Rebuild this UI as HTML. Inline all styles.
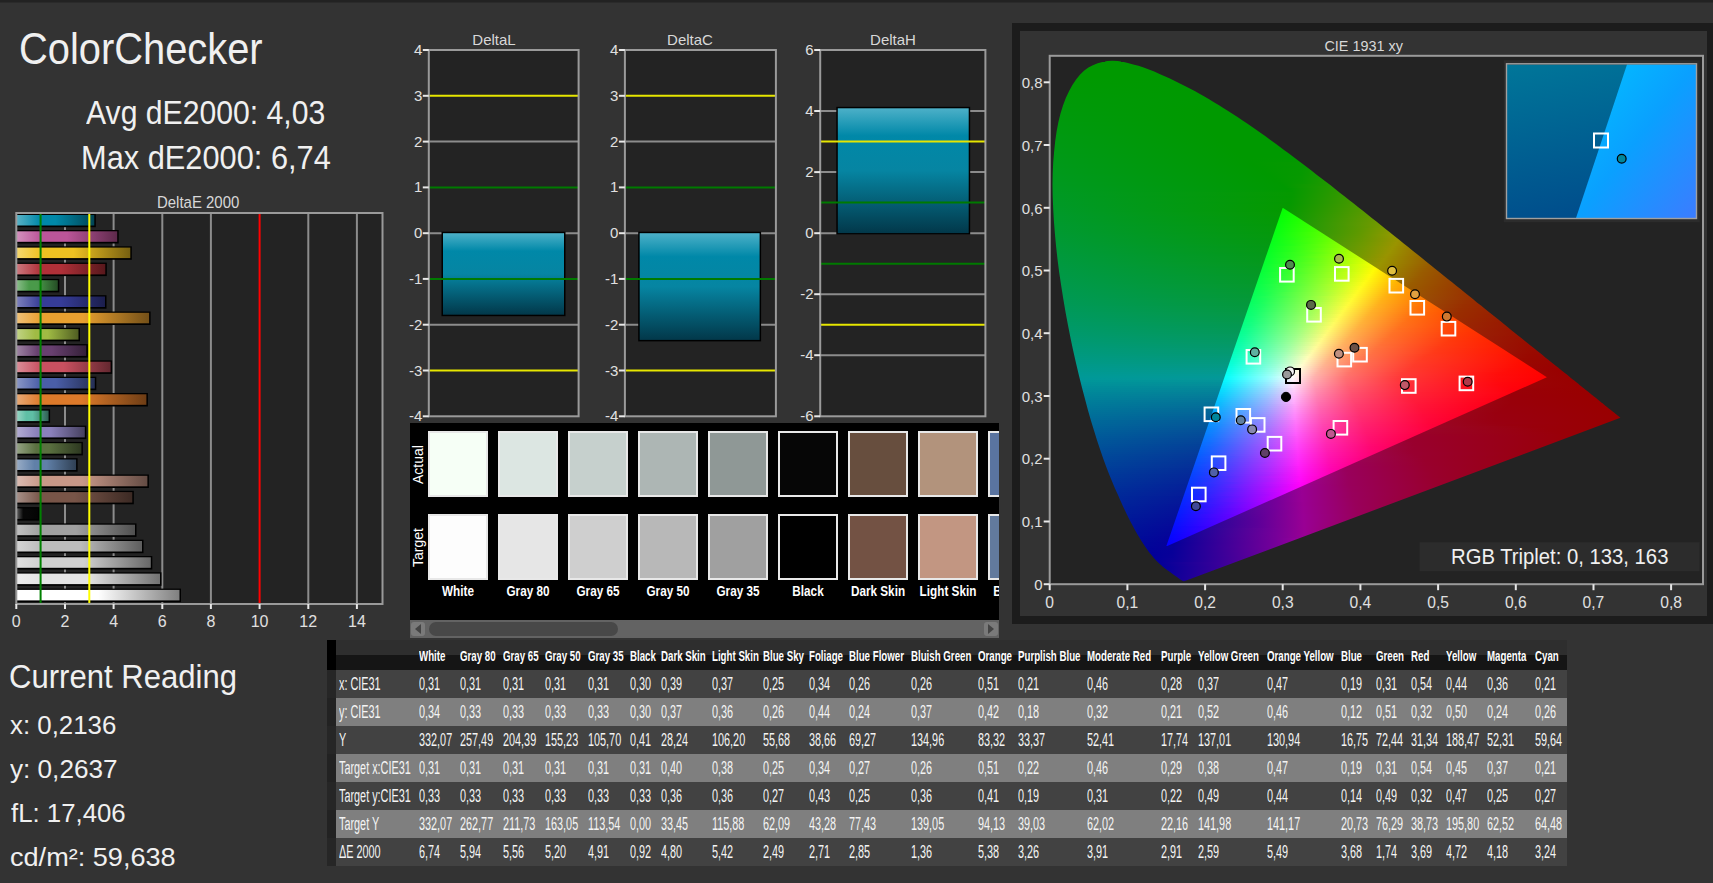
<!DOCTYPE html><html><head><meta charset="utf-8"><style>
html,body{margin:0;padding:0;}
body{width:1713px;height:883px;overflow:hidden;background:#333333;position:relative;font-family:"Liberation Sans",sans-serif;}
.t{position:absolute;white-space:nowrap;line-height:1;transform-origin:0 0;}
.a{position:absolute;}
i{position:absolute;display:block;}
svg{position:absolute;left:0;top:0;}
</style></head><body><div class="a" style="left:0;top:0;width:1713px;height:2px;background:#222222"></div><div class="a" style="left:0;top:2px;width:1713px;height:1px;background:#2a2a2a"></div><div class="t" style="left:19.24px;top:26.63px;font-size:43.90px;color:#f0f0f0;transform:scaleX(0.9079);">ColorChecker</div><div class="t" style="left:85.90px;top:96.28px;font-size:33.80px;color:#f0f0f0;transform:scaleX(0.8926);">Avg dE2000: 4,03</div><div class="t" style="left:81.00px;top:140.58px;font-size:33.80px;color:#f0f0f0;transform:scaleX(0.9105);">Max dE2000: 6,74</div><div class="t" style="left:157.30px;top:194.30px;font-size:16.30px;color:#d8d8d8;transform:scaleX(0.9185);">DeltaE 2000</div><div class="t" style="left:9.26px;top:659.86px;font-size:33.00px;color:#f0f0f0;transform:scaleX(0.9414);">Current Reading</div><div class="t" style="left:10.19px;top:711.73px;font-size:26.30px;color:#f0f0f0;transform:scaleX(0.9821);">x: 0,2136</div><div class="t" style="left:10.19px;top:755.83px;font-size:26.30px;color:#f0f0f0;transform:scaleX(0.9937);">y: 0,2637</div><div class="t" style="left:10.60px;top:800.43px;font-size:26.30px;color:#f0f0f0;transform:scaleX(0.9806);">fL: 17,406</div><div class="t" style="left:10.38px;top:844.33px;font-size:26.30px;color:#f0f0f0;transform:scaleX(1.0301);">cd/m²: 59,638</div><svg width="1713" height="883" viewBox="0 0 1713 883" style="left:0;top:0"><defs><linearGradient id="bg0" x1="0" x2="1" y1="0" y2="0"><stop offset="0" stop-color="#59b2c6"/><stop offset="0.300" stop-color="#0088a8"/><stop offset="0.5" stop-color="#0088a8"/><stop offset="1" stop-color="#004454"/></linearGradient><linearGradient id="bg1" x1="0" x2="1" y1="0" y2="0"><stop offset="0" stop-color="#d390bd"/><stop offset="0.238" stop-color="#bb5599"/><stop offset="0.5" stop-color="#bb5599"/><stop offset="1" stop-color="#5e2a4c"/></linearGradient><linearGradient id="bg2" x1="0" x2="1" y1="0" y2="0"><stop offset="0" stop-color="#f4d76f"/><stop offset="0.210" stop-color="#eec122"/><stop offset="0.5" stop-color="#eec122"/><stop offset="1" stop-color="#776011"/></linearGradient><linearGradient id="bg3" x1="0" x2="1" y1="0" y2="0"><stop offset="0" stop-color="#cc787e"/><stop offset="0.270" stop-color="#b03038"/><stop offset="0.5" stop-color="#b03038"/><stop offset="1" stop-color="#58181c"/></linearGradient><linearGradient id="bg4" x1="0" x2="1" y1="0" y2="0"><stop offset="0" stop-color="#89bd89"/><stop offset="0.300" stop-color="#4a9a4a"/><stop offset="0.5" stop-color="#4a9a4a"/><stop offset="1" stop-color="#254d25"/></linearGradient><linearGradient id="bg5" x1="0" x2="1" y1="0" y2="0"><stop offset="0" stop-color="#7c80bc"/><stop offset="0.270" stop-color="#363c98"/><stop offset="0.5" stop-color="#363c98"/><stop offset="1" stop-color="#1b1e4c"/></linearGradient><linearGradient id="bg6" x1="0" x2="1" y1="0" y2="0"><stop offset="0" stop-color="#f0c178"/><stop offset="0.181" stop-color="#e8a030"/><stop offset="0.5" stop-color="#e8a030"/><stop offset="1" stop-color="#745018"/></linearGradient><linearGradient id="bg7" x1="0" x2="1" y1="0" y2="0"><stop offset="0" stop-color="#c1d385"/><stop offset="0.300" stop-color="#a0bb44"/><stop offset="0.5" stop-color="#a0bb44"/><stop offset="1" stop-color="#505e22"/></linearGradient><linearGradient id="bg8" x1="0" x2="1" y1="0" y2="0"><stop offset="0" stop-color="#9d83a2"/><stop offset="0.300" stop-color="#684070"/><stop offset="0.5" stop-color="#684070"/><stop offset="1" stop-color="#342038"/></linearGradient><linearGradient id="bg9" x1="0" x2="1" y1="0" y2="0"><stop offset="0" stop-color="#db8d98"/><stop offset="0.254" stop-color="#c85060"/><stop offset="0.5" stop-color="#c85060"/><stop offset="1" stop-color="#642830"/></linearGradient><linearGradient id="bg10" x1="0" x2="1" y1="0" y2="0"><stop offset="0" stop-color="#8996c6"/><stop offset="0.300" stop-color="#4a5ea8"/><stop offset="0.5" stop-color="#4a5ea8"/><stop offset="1" stop-color="#252f54"/></linearGradient><linearGradient id="bg11" x1="0" x2="1" y1="0" y2="0"><stop offset="0" stop-color="#e9a975"/><stop offset="0.184" stop-color="#dd7a2a"/><stop offset="0.5" stop-color="#dd7a2a"/><stop offset="1" stop-color="#6e3d15"/></linearGradient><linearGradient id="bg12" x1="0" x2="1" y1="0" y2="0"><stop offset="0" stop-color="#97d5c4"/><stop offset="0.300" stop-color="#5fbfa5"/><stop offset="0.5" stop-color="#5fbfa5"/><stop offset="1" stop-color="#306052"/></linearGradient><linearGradient id="bg13" x1="0" x2="1" y1="0" y2="0"><stop offset="0" stop-color="#b3acd3"/><stop offset="0.300" stop-color="#8a80bb"/><stop offset="0.5" stop-color="#8a80bb"/><stop offset="1" stop-color="#45405e"/></linearGradient><linearGradient id="bg14" x1="0" x2="1" y1="0" y2="0"><stop offset="0" stop-color="#94a283"/><stop offset="0.300" stop-color="#5a7040"/><stop offset="0.5" stop-color="#5a7040"/><stop offset="1" stop-color="#2d3820"/></linearGradient><linearGradient id="bg15" x1="0" x2="1" y1="0" y2="0"><stop offset="0" stop-color="#98acc6"/><stop offset="0.300" stop-color="#6080a8"/><stop offset="0.5" stop-color="#6080a8"/><stop offset="1" stop-color="#304054"/></linearGradient><linearGradient id="bg16" x1="0" x2="1" y1="0" y2="0"><stop offset="0" stop-color="#dbbcb2"/><stop offset="0.183" stop-color="#c89888"/><stop offset="0.5" stop-color="#c89888"/><stop offset="1" stop-color="#644c44"/></linearGradient><linearGradient id="bg17" x1="0" x2="1" y1="0" y2="0"><stop offset="0" stop-color="#a79088"/><stop offset="0.207" stop-color="#785548"/><stop offset="0.5" stop-color="#785548"/><stop offset="1" stop-color="#3c2a24"/></linearGradient><linearGradient id="bg18" x1="0" x2="1" y1="0" y2="0"><stop offset="0" stop-color="#5e5e5e"/><stop offset="0.300" stop-color="#080808"/><stop offset="0.5" stop-color="#080808"/><stop offset="1" stop-color="#040404"/></linearGradient><linearGradient id="bg19" x1="0" x2="1" y1="0" y2="0"><stop offset="0" stop-color="#c1c1c1"/><stop offset="0.202" stop-color="#a0a0a0"/><stop offset="0.5" stop-color="#a0a0a0"/><stop offset="1" stop-color="#505050"/></linearGradient><linearGradient id="bg20" x1="0" x2="1" y1="0" y2="0"><stop offset="0" stop-color="#d4d4d4"/><stop offset="0.191" stop-color="#bdbdbd"/><stop offset="0.5" stop-color="#bdbdbd"/><stop offset="1" stop-color="#5e5e5e"/></linearGradient><linearGradient id="bg21" x1="0" x2="1" y1="0" y2="0"><stop offset="0" stop-color="#e0e0e0"/><stop offset="0.178" stop-color="#d0d0d0"/><stop offset="0.5" stop-color="#d0d0d0"/><stop offset="1" stop-color="#686868"/></linearGradient><linearGradient id="bg22" x1="0" x2="1" y1="0" y2="0"><stop offset="0" stop-color="#ededed"/><stop offset="0.167" stop-color="#e4e4e4"/><stop offset="0.5" stop-color="#e4e4e4"/><stop offset="1" stop-color="#727272"/></linearGradient><linearGradient id="bg23" x1="0" x2="1" y1="0" y2="0"><stop offset="0" stop-color="#ffffff"/><stop offset="0.147" stop-color="#ffffff"/><stop offset="0.5" stop-color="#ffffff"/><stop offset="1" stop-color="#808080"/></linearGradient><linearGradient id="tealv" x1="0" x2="0" y1="0" y2="1"><stop offset="0" stop-color="#4cb0c8"/><stop offset="0.22" stop-color="#0088a8"/><stop offset="0.5" stop-color="#0685a2"/><stop offset="1" stop-color="#02384a"/></linearGradient></defs><rect x="16.3" y="213.0" width="366.2" height="391.0" fill="#232323"/><line x1="65.0" y1="213.0" x2="65.0" y2="604.0" stroke="#8c8c8c" stroke-width="2"/><line x1="113.6" y1="213.0" x2="113.6" y2="604.0" stroke="#8c8c8c" stroke-width="2"/><line x1="162.3" y1="213.0" x2="162.3" y2="604.0" stroke="#8c8c8c" stroke-width="2"/><line x1="210.9" y1="213.0" x2="210.9" y2="604.0" stroke="#8c8c8c" stroke-width="2"/><line x1="308.3" y1="213.0" x2="308.3" y2="604.0" stroke="#8c8c8c" stroke-width="2"/><line x1="356.9" y1="213.0" x2="356.9" y2="604.0" stroke="#8c8c8c" stroke-width="2"/><rect x="16.3" y="213.7" width="79.5" height="13.5" fill="#000"/><rect x="16.8" y="215.0" width="77.5" height="10.5" fill="url(#bg0)"/><rect x="16.3" y="230.0" width="102.4" height="13.5" fill="#000"/><rect x="16.8" y="231.3" width="100.4" height="10.5" fill="url(#bg1)"/><rect x="16.3" y="246.3" width="115.5" height="13.5" fill="#000"/><rect x="16.8" y="247.6" width="113.5" height="10.5" fill="url(#bg2)"/><rect x="16.3" y="262.6" width="90.5" height="13.5" fill="#000"/><rect x="16.8" y="263.9" width="88.5" height="10.5" fill="url(#bg3)"/><rect x="16.3" y="278.9" width="43.0" height="13.5" fill="#000"/><rect x="16.8" y="280.2" width="41.0" height="10.5" fill="url(#bg4)"/><rect x="16.3" y="295.2" width="90.2" height="13.5" fill="#000"/><rect x="16.8" y="296.5" width="88.2" height="10.5" fill="url(#bg5)"/><rect x="16.3" y="311.5" width="134.3" height="13.5" fill="#000"/><rect x="16.8" y="312.8" width="132.3" height="10.5" fill="url(#bg6)"/><rect x="16.3" y="327.8" width="63.7" height="13.5" fill="#000"/><rect x="16.8" y="329.1" width="61.7" height="10.5" fill="url(#bg7)"/><rect x="16.3" y="344.1" width="71.5" height="13.5" fill="#000"/><rect x="16.8" y="345.4" width="69.5" height="10.5" fill="url(#bg8)"/><rect x="16.3" y="360.4" width="95.8" height="13.5" fill="#000"/><rect x="16.8" y="361.7" width="93.8" height="10.5" fill="url(#bg9)"/><rect x="16.3" y="376.7" width="80.0" height="13.5" fill="#000"/><rect x="16.8" y="378.0" width="78.0" height="10.5" fill="url(#bg10)"/><rect x="16.3" y="393.0" width="131.6" height="13.5" fill="#000"/><rect x="16.8" y="394.3" width="129.6" height="10.5" fill="url(#bg11)"/><rect x="16.3" y="409.3" width="33.8" height="13.5" fill="#000"/><rect x="16.8" y="410.6" width="31.8" height="10.5" fill="url(#bg12)"/><rect x="16.3" y="425.6" width="70.0" height="13.5" fill="#000"/><rect x="16.8" y="426.9" width="68.0" height="10.5" fill="url(#bg13)"/><rect x="16.3" y="441.9" width="66.6" height="13.5" fill="#000"/><rect x="16.8" y="443.2" width="64.6" height="10.5" fill="url(#bg14)"/><rect x="16.3" y="458.2" width="61.3" height="13.5" fill="#000"/><rect x="16.8" y="459.5" width="59.3" height="10.5" fill="url(#bg15)"/><rect x="16.3" y="474.5" width="132.6" height="13.5" fill="#000"/><rect x="16.8" y="475.8" width="130.6" height="10.5" fill="url(#bg16)"/><rect x="16.3" y="490.8" width="117.5" height="13.5" fill="#000"/><rect x="16.8" y="492.1" width="115.5" height="10.5" fill="url(#bg17)"/><rect x="16.3" y="507.1" width="23.1" height="13.5" fill="#000"/><rect x="16.8" y="508.4" width="21.1" height="10.5" fill="url(#bg18)"/><rect x="16.3" y="523.4" width="120.2" height="13.5" fill="#000"/><rect x="16.8" y="524.7" width="118.2" height="10.5" fill="url(#bg19)"/><rect x="16.3" y="539.7" width="127.2" height="13.5" fill="#000"/><rect x="16.8" y="541.0" width="125.2" height="10.5" fill="url(#bg20)"/><rect x="16.3" y="556.0" width="136.0" height="13.5" fill="#000"/><rect x="16.8" y="557.3" width="134.0" height="10.5" fill="url(#bg21)"/><rect x="16.3" y="572.3" width="145.2" height="13.5" fill="#000"/><rect x="16.8" y="573.6" width="143.2" height="10.5" fill="url(#bg22)"/><rect x="16.3" y="588.6" width="164.7" height="13.5" fill="#000"/><rect x="16.8" y="589.9" width="162.7" height="10.5" fill="url(#bg23)"/><line x1="40.6" y1="213.0" x2="40.6" y2="604.0" stroke="#008000" stroke-width="2"/><line x1="89.3" y1="213.0" x2="89.3" y2="604.0" stroke="#ffff00" stroke-width="2"/><line x1="259.6" y1="213.0" x2="259.6" y2="604.0" stroke="#ff0000" stroke-width="2"/><rect x="16.3" y="213.0" width="366.2" height="391.0" fill="none" stroke="#9a9a9a" stroke-width="2"/><line x1="16.3" y1="604.0" x2="16.3" y2="609.0" stroke="#e8e8e8" stroke-width="2"/><line x1="65.0" y1="604.0" x2="65.0" y2="609.0" stroke="#e8e8e8" stroke-width="2"/><line x1="113.6" y1="604.0" x2="113.6" y2="609.0" stroke="#e8e8e8" stroke-width="2"/><line x1="162.3" y1="604.0" x2="162.3" y2="609.0" stroke="#e8e8e8" stroke-width="2"/><line x1="210.9" y1="604.0" x2="210.9" y2="609.0" stroke="#e8e8e8" stroke-width="2"/><line x1="259.6" y1="604.0" x2="259.6" y2="609.0" stroke="#e8e8e8" stroke-width="2"/><line x1="308.3" y1="604.0" x2="308.3" y2="609.0" stroke="#e8e8e8" stroke-width="2"/><line x1="356.9" y1="604.0" x2="356.9" y2="609.0" stroke="#e8e8e8" stroke-width="2"/><rect x="428.8" y="50.0" width="149.8" height="366.3" fill="#232323"/><line x1="428.8" y1="141.6" x2="578.6" y2="141.6" stroke="#8c8c8c" stroke-width="2"/><line x1="428.8" y1="233.2" x2="578.6" y2="233.2" stroke="#8c8c8c" stroke-width="2"/><line x1="428.8" y1="324.7" x2="578.6" y2="324.7" stroke="#8c8c8c" stroke-width="2"/><rect x="441.5" y="231.7" width="124.0" height="84.5" fill="#000"/><rect x="443.0" y="233.2" width="121.0" height="81.5" fill="url(#tealv)"/><line x1="428.8" y1="95.8" x2="578.6" y2="95.8" stroke="#e6e600" stroke-width="2"/><line x1="428.8" y1="370.5" x2="578.6" y2="370.5" stroke="#e6e600" stroke-width="2"/><line x1="428.8" y1="187.4" x2="578.6" y2="187.4" stroke="#007a00" stroke-width="2"/><line x1="428.8" y1="278.9" x2="578.6" y2="278.9" stroke="#007a00" stroke-width="2"/><rect x="428.8" y="50.0" width="149.8" height="366.3" fill="none" stroke="#9a9a9a" stroke-width="2"/><line x1="422.8" y1="50.0" x2="428.8" y2="50.0" stroke="#e8e8e8" stroke-width="2"/><line x1="422.8" y1="95.8" x2="428.8" y2="95.8" stroke="#e8e8e8" stroke-width="2"/><line x1="422.8" y1="141.6" x2="428.8" y2="141.6" stroke="#e8e8e8" stroke-width="2"/><line x1="422.8" y1="187.4" x2="428.8" y2="187.4" stroke="#e8e8e8" stroke-width="2"/><line x1="422.8" y1="233.2" x2="428.8" y2="233.2" stroke="#e8e8e8" stroke-width="2"/><line x1="422.8" y1="278.9" x2="428.8" y2="278.9" stroke="#e8e8e8" stroke-width="2"/><line x1="422.8" y1="324.7" x2="428.8" y2="324.7" stroke="#e8e8e8" stroke-width="2"/><line x1="422.8" y1="370.5" x2="428.8" y2="370.5" stroke="#e8e8e8" stroke-width="2"/><line x1="422.8" y1="416.3" x2="428.8" y2="416.3" stroke="#e8e8e8" stroke-width="2"/><rect x="624.9" y="50.0" width="151.0" height="366.3" fill="#232323"/><line x1="624.9" y1="141.6" x2="775.9" y2="141.6" stroke="#8c8c8c" stroke-width="2"/><line x1="624.9" y1="233.2" x2="775.9" y2="233.2" stroke="#8c8c8c" stroke-width="2"/><line x1="624.9" y1="324.7" x2="775.9" y2="324.7" stroke="#8c8c8c" stroke-width="2"/><rect x="638.2" y="231.7" width="122.9" height="109.7" fill="#000"/><rect x="639.7" y="233.2" width="119.9" height="106.7" fill="url(#tealv)"/><line x1="624.9" y1="95.8" x2="775.9" y2="95.8" stroke="#e6e600" stroke-width="2"/><line x1="624.9" y1="370.5" x2="775.9" y2="370.5" stroke="#e6e600" stroke-width="2"/><line x1="624.9" y1="187.4" x2="775.9" y2="187.4" stroke="#007a00" stroke-width="2"/><line x1="624.9" y1="278.9" x2="775.9" y2="278.9" stroke="#007a00" stroke-width="2"/><rect x="624.9" y="50.0" width="151.0" height="366.3" fill="none" stroke="#9a9a9a" stroke-width="2"/><line x1="618.9" y1="50.0" x2="624.9" y2="50.0" stroke="#e8e8e8" stroke-width="2"/><line x1="618.9" y1="95.8" x2="624.9" y2="95.8" stroke="#e8e8e8" stroke-width="2"/><line x1="618.9" y1="141.6" x2="624.9" y2="141.6" stroke="#e8e8e8" stroke-width="2"/><line x1="618.9" y1="187.4" x2="624.9" y2="187.4" stroke="#e8e8e8" stroke-width="2"/><line x1="618.9" y1="233.2" x2="624.9" y2="233.2" stroke="#e8e8e8" stroke-width="2"/><line x1="618.9" y1="278.9" x2="624.9" y2="278.9" stroke="#e8e8e8" stroke-width="2"/><line x1="618.9" y1="324.7" x2="624.9" y2="324.7" stroke="#e8e8e8" stroke-width="2"/><line x1="618.9" y1="370.5" x2="624.9" y2="370.5" stroke="#e8e8e8" stroke-width="2"/><line x1="618.9" y1="416.3" x2="624.9" y2="416.3" stroke="#e8e8e8" stroke-width="2"/><rect x="820.2" y="50.0" width="165.2" height="366.3" fill="#232323"/><line x1="820.2" y1="111.0" x2="985.4" y2="111.0" stroke="#8c8c8c" stroke-width="2"/><line x1="820.2" y1="172.1" x2="985.4" y2="172.1" stroke="#8c8c8c" stroke-width="2"/><line x1="820.2" y1="233.2" x2="985.4" y2="233.2" stroke="#8c8c8c" stroke-width="2"/><line x1="820.2" y1="294.2" x2="985.4" y2="294.2" stroke="#8c8c8c" stroke-width="2"/><line x1="820.2" y1="355.2" x2="985.4" y2="355.2" stroke="#8c8c8c" stroke-width="2"/><rect x="836.3" y="106.8" width="133.9" height="127.8" fill="#000"/><rect x="837.8" y="108.3" width="130.9" height="124.8" fill="url(#tealv)"/><line x1="820.2" y1="141.6" x2="985.4" y2="141.6" stroke="#e6e600" stroke-width="2"/><line x1="820.2" y1="324.7" x2="985.4" y2="324.7" stroke="#e6e600" stroke-width="2"/><line x1="820.2" y1="202.6" x2="985.4" y2="202.6" stroke="#007a00" stroke-width="2"/><line x1="820.2" y1="263.7" x2="985.4" y2="263.7" stroke="#007a00" stroke-width="2"/><rect x="820.2" y="50.0" width="165.2" height="366.3" fill="none" stroke="#9a9a9a" stroke-width="2"/><line x1="814.2" y1="50.0" x2="820.2" y2="50.0" stroke="#e8e8e8" stroke-width="2"/><line x1="814.2" y1="111.0" x2="820.2" y2="111.0" stroke="#e8e8e8" stroke-width="2"/><line x1="814.2" y1="172.1" x2="820.2" y2="172.1" stroke="#e8e8e8" stroke-width="2"/><line x1="814.2" y1="233.2" x2="820.2" y2="233.2" stroke="#e8e8e8" stroke-width="2"/><line x1="814.2" y1="294.2" x2="820.2" y2="294.2" stroke="#e8e8e8" stroke-width="2"/><line x1="814.2" y1="355.2" x2="820.2" y2="355.2" stroke="#e8e8e8" stroke-width="2"/><line x1="814.2" y1="416.3" x2="820.2" y2="416.3" stroke="#e8e8e8" stroke-width="2"/></svg><div class="t" style="left:16.30px;top:613.95px;font-size:16.00px;color:#e0e0e0;transform-origin:50% 0;"><span style="position:relative;left:-50%">0</span></div><div class="t" style="left:64.96px;top:613.95px;font-size:16.00px;color:#e0e0e0;transform-origin:50% 0;"><span style="position:relative;left:-50%">2</span></div><div class="t" style="left:113.62px;top:613.95px;font-size:16.00px;color:#e0e0e0;transform-origin:50% 0;"><span style="position:relative;left:-50%">4</span></div><div class="t" style="left:162.28px;top:613.95px;font-size:16.00px;color:#e0e0e0;transform-origin:50% 0;"><span style="position:relative;left:-50%">6</span></div><div class="t" style="left:210.94px;top:613.95px;font-size:16.00px;color:#e0e0e0;transform-origin:50% 0;"><span style="position:relative;left:-50%">8</span></div><div class="t" style="left:259.60px;top:613.95px;font-size:16.00px;color:#e0e0e0;transform-origin:50% 0;"><span style="position:relative;left:-50%">10</span></div><div class="t" style="left:308.26px;top:613.95px;font-size:16.00px;color:#e0e0e0;transform-origin:50% 0;"><span style="position:relative;left:-50%">12</span></div><div class="t" style="left:356.92px;top:613.95px;font-size:16.00px;color:#e0e0e0;transform-origin:50% 0;"><span style="position:relative;left:-50%">14</span></div><div class="t" style="left:382.3px;top:42.0px;font-size:15px;color:#e0e0e0;width:40px;text-align:right">4</div><div class="t" style="left:382.3px;top:87.8px;font-size:15px;color:#e0e0e0;width:40px;text-align:right">3</div><div class="t" style="left:382.3px;top:133.6px;font-size:15px;color:#e0e0e0;width:40px;text-align:right">2</div><div class="t" style="left:382.3px;top:179.4px;font-size:15px;color:#e0e0e0;width:40px;text-align:right">1</div><div class="t" style="left:382.3px;top:225.2px;font-size:15px;color:#e0e0e0;width:40px;text-align:right">0</div><div class="t" style="left:382.3px;top:270.9px;font-size:15px;color:#e0e0e0;width:40px;text-align:right">-1</div><div class="t" style="left:382.3px;top:316.7px;font-size:15px;color:#e0e0e0;width:40px;text-align:right">-2</div><div class="t" style="left:382.3px;top:362.5px;font-size:15px;color:#e0e0e0;width:40px;text-align:right">-3</div><div class="t" style="left:382.3px;top:408.3px;font-size:15px;color:#e0e0e0;width:40px;text-align:right">-4</div><div class="t" style="left:578.4px;top:42.0px;font-size:15px;color:#e0e0e0;width:40px;text-align:right">4</div><div class="t" style="left:578.4px;top:87.8px;font-size:15px;color:#e0e0e0;width:40px;text-align:right">3</div><div class="t" style="left:578.4px;top:133.6px;font-size:15px;color:#e0e0e0;width:40px;text-align:right">2</div><div class="t" style="left:578.4px;top:179.4px;font-size:15px;color:#e0e0e0;width:40px;text-align:right">1</div><div class="t" style="left:578.4px;top:225.2px;font-size:15px;color:#e0e0e0;width:40px;text-align:right">0</div><div class="t" style="left:578.4px;top:270.9px;font-size:15px;color:#e0e0e0;width:40px;text-align:right">-1</div><div class="t" style="left:578.4px;top:316.7px;font-size:15px;color:#e0e0e0;width:40px;text-align:right">-2</div><div class="t" style="left:578.4px;top:362.5px;font-size:15px;color:#e0e0e0;width:40px;text-align:right">-3</div><div class="t" style="left:578.4px;top:408.3px;font-size:15px;color:#e0e0e0;width:40px;text-align:right">-4</div><div class="t" style="left:773.7px;top:42.0px;font-size:15px;color:#e0e0e0;width:40px;text-align:right">6</div><div class="t" style="left:773.7px;top:103.1px;font-size:15px;color:#e0e0e0;width:40px;text-align:right">4</div><div class="t" style="left:773.7px;top:164.1px;font-size:15px;color:#e0e0e0;width:40px;text-align:right">2</div><div class="t" style="left:773.7px;top:225.2px;font-size:15px;color:#e0e0e0;width:40px;text-align:right">0</div><div class="t" style="left:773.7px;top:286.2px;font-size:15px;color:#e0e0e0;width:40px;text-align:right">-2</div><div class="t" style="left:773.7px;top:347.2px;font-size:15px;color:#e0e0e0;width:40px;text-align:right">-4</div><div class="t" style="left:773.7px;top:408.3px;font-size:15px;color:#e0e0e0;width:40px;text-align:right">-6</div><div class="t" style="left:494.00px;top:32.30px;font-size:15.00px;color:#d8d8d8;transform-origin:50% 0;"><span style="position:relative;left:-50%">DeltaL</span></div><div class="t" style="left:690.00px;top:32.30px;font-size:15.00px;color:#d8d8d8;transform-origin:50% 0;"><span style="position:relative;left:-50%">DeltaC</span></div><div class="t" style="left:893.00px;top:32.30px;font-size:15.00px;color:#d8d8d8;transform-origin:50% 0;"><span style="position:relative;left:-50%">DeltaH</span></div><div class="a" style="left:410px;top:423px;width:589px;height:197px;background:#000;overflow:hidden"><div class="a" style="left:18px;top:8px;width:56px;height:62px;border:2px solid #e8e8e8;background:#f6fff6"></div><div class="a" style="left:18px;top:91px;width:56px;height:62px;border:2px solid #e8e8e8;background:#fdfdfd"></div><div class="t" style="left:8px;top:160.7px;width:80px;text-align:center;font-size:14.5px;font-weight:bold;color:#fff;transform:scaleX(0.81);transform-origin:50% 0">White</div><div class="a" style="left:88px;top:8px;width:56px;height:62px;border:2px solid #e8e8e8;background:#dce6e2"></div><div class="a" style="left:88px;top:91px;width:56px;height:62px;border:2px solid #e8e8e8;background:#e6e6e6"></div><div class="t" style="left:78px;top:160.7px;width:80px;text-align:center;font-size:14.5px;font-weight:bold;color:#fff;transform:scaleX(0.81);transform-origin:50% 0">Gray 80</div><div class="a" style="left:158px;top:8px;width:56px;height:62px;border:2px solid #e8e8e8;background:#c6d0cd"></div><div class="a" style="left:158px;top:91px;width:56px;height:62px;border:2px solid #e8e8e8;background:#cfcfcf"></div><div class="t" style="left:148px;top:160.7px;width:80px;text-align:center;font-size:14.5px;font-weight:bold;color:#fff;transform:scaleX(0.81);transform-origin:50% 0">Gray 65</div><div class="a" style="left:228px;top:8px;width:56px;height:62px;border:2px solid #e8e8e8;background:#adb6b4"></div><div class="a" style="left:228px;top:91px;width:56px;height:62px;border:2px solid #e8e8e8;background:#b8b8b8"></div><div class="t" style="left:218px;top:160.7px;width:80px;text-align:center;font-size:14.5px;font-weight:bold;color:#fff;transform:scaleX(0.81);transform-origin:50% 0">Gray 50</div><div class="a" style="left:298px;top:8px;width:56px;height:62px;border:2px solid #e8e8e8;background:#8f9896"></div><div class="a" style="left:298px;top:91px;width:56px;height:62px;border:2px solid #e8e8e8;background:#a0a0a0"></div><div class="t" style="left:288px;top:160.7px;width:80px;text-align:center;font-size:14.5px;font-weight:bold;color:#fff;transform:scaleX(0.81);transform-origin:50% 0">Gray 35</div><div class="a" style="left:368px;top:8px;width:56px;height:62px;border:2px solid #e8e8e8;background:#060606"></div><div class="a" style="left:368px;top:91px;width:56px;height:62px;border:2px solid #e8e8e8;background:#000000"></div><div class="t" style="left:358px;top:160.7px;width:80px;text-align:center;font-size:14.5px;font-weight:bold;color:#fff;transform:scaleX(0.81);transform-origin:50% 0">Black</div><div class="a" style="left:438px;top:8px;width:56px;height:62px;border:2px solid #e8e8e8;background:#674e3e"></div><div class="a" style="left:438px;top:91px;width:56px;height:62px;border:2px solid #e8e8e8;background:#735244"></div><div class="t" style="left:428px;top:160.7px;width:80px;text-align:center;font-size:14.5px;font-weight:bold;color:#fff;transform:scaleX(0.81);transform-origin:50% 0">Dark Skin</div><div class="a" style="left:508px;top:8px;width:56px;height:62px;border:2px solid #e8e8e8;background:#b2937c"></div><div class="a" style="left:508px;top:91px;width:56px;height:62px;border:2px solid #e8e8e8;background:#c29682"></div><div class="t" style="left:498px;top:160.7px;width:80px;text-align:center;font-size:14.5px;font-weight:bold;color:#fff;transform:scaleX(0.81);transform-origin:50% 0">Light Skin</div><div class="a" style="left:578px;top:8px;width:56px;height:62px;border:2px solid #e8e8e8;background:#5a74a0"></div><div class="a" style="left:578px;top:91px;width:56px;height:62px;border:2px solid #e8e8e8;background:#627a9d"></div><div class="t" style="left:568px;top:160.7px;width:80px;text-align:center;font-size:14.5px;font-weight:bold;color:#fff;transform:scaleX(0.81);transform-origin:50% 0">Blue Sky</div><div class="t" style="left:1px;top:61px;font-size:14px;color:#fff;transform:rotate(-90deg);transform-origin:0 0">Actual</div><div class="t" style="left:1px;top:144px;font-size:14px;color:#fff;transform:rotate(-90deg);transform-origin:0 0">Target</div></div><div class="a" style="left:410px;top:620px;width:589px;height:18px;background:#636363"></div><div class="a" style="left:429px;top:622px;width:189px;height:14px;background:#484848;border-radius:7px"></div><div class="a" style="left:411px;top:622px;width:14px;height:14px;background:#7a7a7a;border-radius:3px"></div><div class="a" style="left:984px;top:622px;width:14px;height:14px;background:#7a7a7a;border-radius:3px"></div><svg width="1713" height="883" style="left:0;top:0;pointer-events:none"><path d="M421 624 L415 629 L421 634 Z" fill="#444"/><path d="M988 624 L994 629 L988 634 Z" fill="#444"/></svg><div class="a" style="left:1012px;top:23px;width:701px;height:601px;background:#1c1c1c"></div><div class="a" style="left:1020px;top:31px;width:687px;height:585px;background:#333333"></div><div class="a" style="left:1049.7px;top:55.8px;width:653px;height:528.4px;background:#232323"></div><div class="a" style="left:0;top:0;width:1713px;height:883px;clip-path:path('M1184.9 581.1 L1184.9 581.1 L1184.9 581.1 L1184.9 581.1 L1184.9 581.1 L1184.9 581.1 L1184.9 581.1 L1184.8 581.1 L1184.8 581.1 L1184.8 581.1 L1184.8 581.1 L1184.7 581.1 L1184.7 581.1 L1184.7 581.1 L1184.7 581.1 L1184.6 581.1 L1184.6 581.1 L1184.6 581.1 L1184.6 581.1 L1184.5 581.1 L1184.5 581.1 L1184.4 581.2 L1184.4 581.2 L1184.4 581.2 L1184.3 581.2 L1184.3 581.2 L1184.2 581.2 L1184.2 581.2 L1184.2 581.2 L1184.1 581.2 L1184.1 581.2 L1184.0 581.2 L1184.0 581.2 L1183.9 581.2 L1183.9 581.2 L1183.8 581.2 L1183.8 581.2 L1183.7 581.2 L1183.7 581.2 L1183.6 581.2 L1183.5 581.2 L1183.5 581.2 L1183.4 581.2 L1183.3 581.2 L1183.2 581.1 L1183.1 581.1 L1183.1 581.1 L1183.0 581.0 L1182.8 581.0 L1182.7 580.9 L1182.6 580.9 L1182.5 580.8 L1182.3 580.7 L1182.1 580.7 L1182.0 580.6 L1181.8 580.5 L1181.7 580.4 L1181.5 580.3 L1181.3 580.1 L1181.1 580.0 L1180.9 579.9 L1180.7 579.7 L1180.4 579.6 L1180.2 579.4 L1179.9 579.2 L1179.6 579.0 L1179.3 578.8 L1179.1 578.6 L1178.8 578.4 L1178.4 578.1 L1178.1 577.9 L1177.8 577.6 L1177.4 577.4 L1177.0 577.1 L1176.6 576.8 L1176.2 576.5 L1175.8 576.2 L1175.3 575.9 L1174.8 575.5 L1174.3 575.2 L1173.8 574.8 L1173.2 574.4 L1172.6 574.0 L1172.0 573.6 L1171.3 573.1 L1170.7 572.6 L1170.0 572.1 L1169.3 571.6 L1168.6 571.1 L1167.8 570.6 L1167.0 570.0 L1166.2 569.3 L1165.3 568.7 L1164.4 568.0 L1163.5 567.2 L1162.5 566.4 L1161.6 565.6 L1160.6 564.7 L1159.5 563.8 L1158.5 562.8 L1157.4 561.7 L1156.2 560.5 L1155.0 559.2 L1153.6 557.7 L1152.3 556.0 L1150.8 554.3 L1149.3 552.4 L1147.7 550.3 L1146.1 547.9 L1144.4 545.4 L1142.6 542.8 L1140.8 539.9 L1138.9 536.8 L1136.9 533.5 L1134.8 529.7 L1132.7 525.7 L1130.4 521.4 L1128.1 516.9 L1125.7 512.0 L1123.2 506.7 L1120.6 500.9 L1117.9 494.8 L1115.0 488.4 L1112.1 481.5 L1109.1 474.2 L1106.1 466.5 L1103.1 458.3 L1100.1 449.5 L1097.0 440.3 L1094.0 430.6 L1090.9 420.5 L1087.9 410.0 L1085.0 399.1 L1082.0 387.7 L1079.0 375.8 L1076.1 363.4 L1073.2 350.8 L1070.5 338.0 L1068.0 325.3 L1065.6 312.4 L1063.3 299.1 L1061.2 285.8 L1059.2 272.4 L1057.5 259.3 L1056.1 246.4 L1054.9 233.7 L1053.9 221.1 L1053.2 208.7 L1052.7 196.5 L1052.5 184.7 L1052.7 173.4 L1053.2 162.4 L1054.1 151.7 L1055.2 141.3 L1056.6 131.4 L1058.4 122.1 L1060.5 113.5 L1063.0 105.6 L1065.8 98.1 L1069.0 91.3 L1072.4 85.0 L1076.1 79.5 L1079.9 74.8 L1084.0 70.8 L1088.4 67.6 L1092.9 65.2 L1097.7 63.3 L1102.5 62.0 L1107.4 61.1 L1112.4 60.7 L1117.5 61.0 L1122.7 61.8 L1127.9 63.0 L1133.2 64.4 L1138.4 65.8 L1143.6 67.5 L1148.9 69.4 L1154.2 71.6 L1159.5 73.9 L1164.7 76.2 L1169.9 78.6 L1174.9 81.0 L1179.9 83.4 L1184.9 85.9 L1189.8 88.5 L1194.7 91.1 L1199.5 93.8 L1204.4 96.6 L1209.1 99.3 L1213.9 102.2 L1218.6 105.0 L1223.3 108.0 L1228.1 111.0 L1232.8 114.0 L1237.5 117.1 L1242.2 120.2 L1246.8 123.3 L1251.5 126.5 L1256.2 129.8 L1260.8 133.0 L1265.5 136.3 L1270.1 139.7 L1274.7 143.0 L1279.4 146.4 L1284.0 149.9 L1288.6 153.3 L1293.2 156.7 L1297.8 160.2 L1302.5 163.7 L1307.1 167.3 L1311.7 170.8 L1316.3 174.4 L1321.0 177.9 L1325.6 181.5 L1330.3 185.1 L1334.9 188.8 L1339.5 192.4 L1344.1 196.0 L1348.8 199.7 L1353.4 203.3 L1358.0 207.0 L1362.6 210.6 L1367.2 214.3 L1371.8 217.9 L1376.4 221.6 L1381.0 225.2 L1385.6 228.9 L1390.1 232.5 L1394.7 236.2 L1399.2 239.8 L1403.7 243.4 L1408.2 247.1 L1412.7 250.7 L1417.2 254.3 L1421.6 257.8 L1426.1 261.4 L1430.5 264.9 L1434.8 268.5 L1439.2 272.0 L1443.5 275.5 L1447.8 278.9 L1452.1 282.3 L1456.3 285.8 L1460.5 289.1 L1464.7 292.5 L1468.8 295.8 L1472.9 299.1 L1476.9 302.4 L1481.0 305.6 L1484.9 308.8 L1488.9 311.9 L1492.7 315.0 L1496.5 318.1 L1500.3 321.1 L1503.9 324.1 L1507.6 327.0 L1511.1 329.9 L1514.6 332.7 L1518.0 335.4 L1521.3 338.1 L1524.6 340.7 L1527.7 343.2 L1530.8 345.7 L1533.8 348.1 L1536.8 350.5 L1539.7 352.8 L1542.5 355.1 L1545.3 357.4 L1548.0 359.6 L1550.7 361.7 L1553.2 363.7 L1555.7 365.7 L1558.1 367.6 L1560.4 369.5 L1562.6 371.2 L1564.8 373.0 L1566.9 374.6 L1568.9 376.3 L1570.9 377.9 L1572.7 379.4 L1574.6 380.8 L1576.3 382.3 L1578.0 383.6 L1579.6 384.9 L1581.2 386.2 L1582.7 387.4 L1584.1 388.6 L1585.5 389.7 L1586.9 390.8 L1588.2 391.8 L1589.4 392.8 L1590.6 393.8 L1591.7 394.7 L1592.8 395.6 L1593.9 396.4 L1595.0 397.3 L1596.0 398.1 L1596.9 398.8 L1597.8 399.6 L1598.7 400.3 L1599.6 401.0 L1600.5 401.7 L1601.3 402.4 L1602.1 403.0 L1602.9 403.6 L1603.6 404.2 L1604.3 404.8 L1605.0 405.4 L1605.7 405.9 L1606.4 406.5 L1607.0 407.0 L1607.6 407.5 L1608.2 408.0 L1608.8 408.4 L1609.3 408.9 L1609.9 409.3 L1610.4 409.7 L1610.9 410.0 L1611.3 410.4 L1611.8 410.8 L1612.2 411.1 L1612.6 411.4 L1612.9 411.7 L1613.3 412.0 L1613.7 412.3 L1614.0 412.6 L1614.3 412.8 L1614.6 413.1 L1614.9 413.3 L1615.2 413.5 L1615.4 413.7 L1615.7 413.9 L1615.9 414.1 L1616.2 414.3 L1616.4 414.5 L1616.6 414.7 L1616.8 414.8 L1616.9 414.9 L1617.1 415.1 L1617.2 415.2 L1617.4 415.3 L1617.5 415.4 L1617.6 415.5 L1617.7 415.6 L1617.8 415.7 L1618.0 415.8 L1618.1 415.8 L1618.2 415.9 L1618.3 416.1 L1618.5 416.2 L1618.7 416.3 L1618.8 416.5 L1619.0 416.6 L1619.2 416.8 L1619.4 416.9 L1619.6 417.1 L1619.8 417.2 L1620.0 417.4 L1620.2 417.5 L1620.3 417.7 L1620.4 417.8 Z')"><i style="left:1105px;top:60px;width:16px;height:2px;background:linear-gradient(90deg,#009900 0px,#009900 16px)"></i><i style="left:1095px;top:62px;width:36px;height:2px;background:linear-gradient(90deg,#009900 0px,#009900 36px)"></i><i style="left:1090px;top:64px;width:49px;height:2px;background:linear-gradient(90deg,#009900 0px,#009900 49px)"></i><i style="left:1086px;top:66px;width:60px;height:2px;background:linear-gradient(90deg,#009900 0px,#009900 60px)"></i><i style="left:1083px;top:68px;width:68px;height:2px;background:linear-gradient(90deg,#009900 0px,#009900 68px)"></i><i style="left:1080px;top:70px;width:76px;height:2px;background:linear-gradient(90deg,#009900 0px,#009900 76px)"></i><i style="left:1078px;top:72px;width:83px;height:2px;background:linear-gradient(90deg,#009900 0px,#009900 83px)"></i><i style="left:1076px;top:74px;width:90px;height:2px;background:linear-gradient(90deg,#009900 0px,#009900 90px)"></i><i style="left:1075px;top:76px;width:95px;height:2px;background:linear-gradient(90deg,#009900 0px,#009900 95px)"></i><i style="left:1073px;top:78px;width:101px;height:2px;background:linear-gradient(90deg,#009901 0px,#009900 101px)"></i><i style="left:1072px;top:80px;width:107px;height:2px;background:linear-gradient(90deg,#009902 0px,#009900 107px)"></i><i style="left:1070px;top:82px;width:113px;height:2px;background:linear-gradient(90deg,#009902 0px,#009900 113px)"></i><i style="left:1069px;top:84px;width:118px;height:2px;background:linear-gradient(90deg,#009903 0px,#009900 118px)"></i><i style="left:1068px;top:86px;width:122px;height:2px;background:linear-gradient(90deg,#009903 0px,#009900 122px)"></i><i style="left:1067px;top:88px;width:127px;height:2px;background:linear-gradient(90deg,#009904 0px,#009900 127px)"></i><i style="left:1066px;top:90px;width:132px;height:2px;background:linear-gradient(90deg,#009905 0px,#009900 132px)"></i><i style="left:1065px;top:92px;width:137px;height:2px;background:linear-gradient(90deg,#009905 0px,#009900 137px)"></i><i style="left:1064px;top:94px;width:141px;height:2px;background:linear-gradient(90deg,#009906 0px,#009900 141px)"></i><i style="left:1063px;top:96px;width:146px;height:2px;background:linear-gradient(90deg,#009906 0px,#009900 146px)"></i><i style="left:1062px;top:98px;width:150px;height:2px;background:linear-gradient(90deg,#009907 0px,#009900 150px)"></i><i style="left:1061px;top:100px;width:154px;height:2px;background:linear-gradient(90deg,#009908 0px,#009900 154px)"></i><i style="left:1060px;top:102px;width:159px;height:2px;background:linear-gradient(90deg,#009908 0px,#009900 154px,#009900 159px)"></i><i style="left:1060px;top:104px;width:162px;height:2px;background:linear-gradient(90deg,#009909 0px,#009900 149px,#009900 162px)"></i><i style="left:1059px;top:106px;width:166px;height:2px;background:linear-gradient(90deg,#009909 0px,#009900 146px,#009900 166px)"></i><i style="left:1058px;top:108px;width:170px;height:2px;background:linear-gradient(90deg,#00990a 0px,#009900 144px,#009900 170px)"></i><i style="left:1058px;top:110px;width:174px;height:2px;background:linear-gradient(90deg,#00990a 0px,#009900 144px,#009900 174px)"></i><i style="left:1057px;top:112px;width:178px;height:2px;background:linear-gradient(90deg,#00990b 0px,#009900 144px,#009900 178px)"></i><i style="left:1057px;top:114px;width:181px;height:2px;background:linear-gradient(90deg,#00990b 0px,#009900 144px,#009900 181px)"></i><i style="left:1056px;top:116px;width:185px;height:2px;background:linear-gradient(90deg,#00990c 0px,#009900 146px,#009900 185px)"></i><i style="left:1056px;top:118px;width:188px;height:2px;background:linear-gradient(90deg,#00990c 0px,#009900 147px,#009900 188px)"></i><i style="left:1055px;top:120px;width:192px;height:2px;background:linear-gradient(90deg,#00990d 0px,#009900 149px,#009900 192px)"></i><i style="left:1055px;top:122px;width:195px;height:2px;background:linear-gradient(90deg,#00990e 0px,#009900 150px,#009900 195px)"></i><i style="left:1054px;top:124px;width:199px;height:2px;background:linear-gradient(90deg,#00990e 0px,#009900 153px,#009900 199px)"></i><i style="left:1054px;top:126px;width:202px;height:2px;background:linear-gradient(90deg,#00990f 0px,#009900 155px,#009900 202px)"></i><i style="left:1054px;top:128px;width:205px;height:2px;background:linear-gradient(90deg,#00990f 0px,#009900 157px,#009900 205px)"></i><i style="left:1053px;top:130px;width:208px;height:2px;background:linear-gradient(90deg,#009910 0px,#009900 160px,#009900 208px)"></i><i style="left:1053px;top:132px;width:211px;height:2px;background:linear-gradient(90deg,#009910 0px,#009900 162px,#009900 211px)"></i><i style="left:1053px;top:134px;width:214px;height:2px;background:linear-gradient(90deg,#009911 0px,#009900 164px,#009900 214px)"></i><i style="left:1052px;top:136px;width:218px;height:2px;background:linear-gradient(90deg,#009912 0px,#009900 167px,#009900 218px)"></i><i style="left:1052px;top:138px;width:221px;height:2px;background:linear-gradient(90deg,#009912 0px,#009900 169px,#009900 221px)"></i><i style="left:1052px;top:140px;width:223px;height:2px;background:linear-gradient(90deg,#009913 0px,#009900 172px,#009900 223px)"></i><i style="left:1052px;top:142px;width:226px;height:2px;background:linear-gradient(90deg,#009913 0px,#009900 174px,#009900 226px)"></i><i style="left:1051px;top:144px;width:230px;height:2px;background:linear-gradient(90deg,#009914 0px,#009900 178px,#009900 230px)"></i><i style="left:1051px;top:146px;width:233px;height:2px;background:linear-gradient(90deg,#009914 0px,#009900 181px,#009900 233px)"></i><i style="left:1051px;top:148px;width:235px;height:2px;background:linear-gradient(90deg,#009915 0px,#009900 183px,#009900 235px)"></i><i style="left:1051px;top:150px;width:238px;height:2px;background:linear-gradient(90deg,#009916 0px,#009900 186px,#009900 238px)"></i><i style="left:1050px;top:152px;width:242px;height:2px;background:linear-gradient(90deg,#009916 0px,#009900 189px,#009900 242px)"></i><i style="left:1050px;top:154px;width:244px;height:2px;background:linear-gradient(90deg,#009917 0px,#009900 192px,#009900 244px)"></i><i style="left:1050px;top:156px;width:247px;height:2px;background:linear-gradient(90deg,#009917 0px,#009900 194px,#009900 247px)"></i><i style="left:1050px;top:158px;width:250px;height:2px;background:linear-gradient(90deg,#009918 0px,#009900 197px,#019900 250px)"></i><i style="left:1050px;top:160px;width:252px;height:2px;background:linear-gradient(90deg,#009919 0px,#009900 200px,#039900 252px)"></i><i style="left:1050px;top:162px;width:255px;height:2px;background:linear-gradient(90deg,#009919 0px,#009900 202px,#069900 255px)"></i><i style="left:1050px;top:164px;width:258px;height:2px;background:linear-gradient(90deg,#00991a 0px,#009900 205px,#069900 254px,#099900 258px)"></i><i style="left:1050px;top:166px;width:260px;height:2px;background:linear-gradient(90deg,#00991a 0px,#009900 208px,#059900 253px,#0b9900 260px)"></i><i style="left:1049px;top:168px;width:264px;height:2px;background:linear-gradient(90deg,#00991b 0px,#009900 212px,#069900 254px,#0e9900 264px)"></i><i style="left:1049px;top:170px;width:266px;height:2px;background:linear-gradient(90deg,#00991c 0px,#009900 214px,#069900 253px,#109900 266px)"></i><i style="left:1049px;top:172px;width:269px;height:2px;background:linear-gradient(90deg,#00991c 0px,#009900 217px,#069900 253px,#149900 269px)"></i><i style="left:1049px;top:174px;width:272px;height:2px;background:linear-gradient(90deg,#00991d 0px,#009900 220px,#069900 252px,#179900 272px)"></i><i style="left:1049px;top:176px;width:274px;height:2px;background:linear-gradient(90deg,#00991e 0px,#009900 223px,#079900 252px,#199900 274px)"></i><i style="left:1049px;top:178px;width:277px;height:2px;background:linear-gradient(90deg,#00991e 0px,#009900 225px,#079900 252px,#1d9900 277px)"></i><i style="left:1049px;top:180px;width:279px;height:2px;background:linear-gradient(90deg,#00991f 0px,#009900 228px,#099900 253px,#1f9900 279px)"></i><i style="left:1049px;top:182px;width:282px;height:2px;background:linear-gradient(90deg,#009920 0px,#009900 231px,#0b9900 255px,#239900 282px)"></i><i style="left:1049px;top:184px;width:285px;height:2px;background:linear-gradient(90deg,#009920 0px,#009900 234px,#1c9900 274px,#279900 285px)"></i><i style="left:1049px;top:186px;width:287px;height:2px;background:linear-gradient(90deg,#009921 0px,#009900 236px,#299900 287px)"></i><i style="left:1049px;top:188px;width:290px;height:2px;background:linear-gradient(90deg,#009922 0px,#009900 239px,#2d9900 290px)"></i><i style="left:1049px;top:190px;width:292px;height:2px;background:linear-gradient(90deg,#009922 0px,#039900 242px,#309900 292px)"></i><i style="left:1049px;top:192px;width:295px;height:2px;background:linear-gradient(90deg,#009923 0px,#059900 244px,#349900 295px)"></i><i style="left:1049px;top:194px;width:297px;height:2px;background:linear-gradient(90deg,#009924 0px,#059900 243px,#379900 297px)"></i><i style="left:1049px;top:196px;width:300px;height:2px;background:linear-gradient(90deg,#009924 0px,#049900 242px,#3b9900 300px)"></i><i style="left:1049px;top:198px;width:302px;height:2px;background:linear-gradient(90deg,#009925 0px,#059900 242px,#3e9900 302px)"></i><i style="left:1049px;top:200px;width:305px;height:2px;background:linear-gradient(90deg,#009926 0px,#059900 241px,#439900 305px)"></i><i style="left:1049px;top:202px;width:307px;height:2px;background:linear-gradient(90deg,#009927 0px,#049900 240px,#469900 307px)"></i><i style="left:1050px;top:204px;width:309px;height:2px;background:linear-gradient(90deg,#009927 0px,#059900 239px,#4b9900 309px)"></i><i style="left:1050px;top:206px;width:312px;height:2px;background:linear-gradient(90deg,#009928 0px,#059900 238px,#4f9900 312px)"></i><i style="left:1050px;top:208px;width:314px;height:2px;background:linear-gradient(90deg,#009929 0px,#059900 237px,#539900 314px)"></i><i style="left:1050px;top:210px;width:317px;height:2px;background:linear-gradient(90deg,#009929 0px,#049900 236px,#589900 317px)"></i><i style="left:1050px;top:212px;width:319px;height:2px;background:linear-gradient(90deg,#00992a 0px,#059901 236px,#5c9900 319px)"></i><i style="left:1050px;top:214px;width:322px;height:2px;background:linear-gradient(90deg,#00992b 0px,#059902 235px,#619900 322px)"></i><i style="left:1050px;top:216px;width:324px;height:2px;background:linear-gradient(90deg,#00992c 0px,#049903 234px,#659900 324px)"></i><i style="left:1050px;top:218px;width:327px;height:2px;background:linear-gradient(90deg,#00992c 0px,#049904 233px,#6a9900 327px)"></i><i style="left:1050px;top:220px;width:329px;height:2px;background:linear-gradient(90deg,#00992d 0px,#059905 233px,#6f9900 329px)"></i><i style="left:1051px;top:222px;width:331px;height:2px;background:linear-gradient(90deg,#00992e 0px,#059906 231px,#749900 331px)"></i><i style="left:1051px;top:224px;width:333px;height:2px;background:linear-gradient(90deg,#00992f 0px,#049907 230px,#729900 328px,#799900 333px)"></i><i style="left:1051px;top:226px;width:336px;height:2px;background:linear-gradient(90deg,#009930 0px,#059908 230px,#659900 317px,#7f9900 336px)"></i><i style="left:1051px;top:228px;width:338px;height:2px;background:linear-gradient(90deg,#009930 0px,#059909 229px,#5e9900 310px,#849900 338px)"></i><i style="left:1051px;top:230px;width:341px;height:2px;background:linear-gradient(90deg,#009931 0px,#05990a 228px,#5c9900 307px,#8a9900 341px)"></i><i style="left:1051px;top:232px;width:343px;height:2px;background:linear-gradient(90deg,#009932 0px,#04990b 227px,#5c9900 306px,#8f9900 343px)"></i><i style="left:1052px;top:234px;width:345px;height:2px;background:linear-gradient(90deg,#009933 0px,#05990c 226px,#5f9900 306px,#969900 345px)"></i><i style="left:1052px;top:236px;width:347px;height:2px;background:linear-gradient(90deg,#009934 0px,#05990d 225px,#629900 307px,#999700 347px)"></i><i style="left:1052px;top:238px;width:350px;height:2px;background:linear-gradient(90deg,#009935 0px,#04990e 224px,#659900 308px,#999500 347px,#999000 350px)"></i><i style="left:1052px;top:240px;width:352px;height:2px;background:linear-gradient(90deg,#009935 0px,#05990f 224px,#699900 310px,#999400 346px,#998b00 352px)"></i><i style="left:1052px;top:242px;width:355px;height:2px;background:linear-gradient(90deg,#009936 0px,#059910 223px,#6e9900 312px,#999400 344px,#998500 355px)"></i><i style="left:1052px;top:244px;width:357px;height:2px;background:linear-gradient(90deg,#009937 0px,#059912 222px,#729900 314px,#999400 343px,#998100 357px)"></i><i style="left:1053px;top:246px;width:359px;height:2px;background:linear-gradient(90deg,#009938 0px,#049913 220px,#739900 312px,#999400 340px,#997b00 359px)"></i><i style="left:1053px;top:248px;width:361px;height:2px;background:linear-gradient(90deg,#009939 0px,#059914 220px,#739900 311px,#999400 339px,#997700 361px)"></i><i style="left:1053px;top:250px;width:364px;height:2px;background:linear-gradient(90deg,#00993a 0px,#059915 219px,#749900 310px,#999400 337px,#997200 364px)"></i><i style="left:1053px;top:252px;width:366px;height:2px;background:linear-gradient(90deg,#00993b 0px,#049916 218px,#739900 308px,#999400 336px,#996e00 366px)"></i><i style="left:1054px;top:254px;width:368px;height:2px;background:linear-gradient(90deg,#00993c 0px,#049918 216px,#739900 306px,#999400 333px,#996a00 368px)"></i><i style="left:1054px;top:256px;width:370px;height:2px;background:linear-gradient(90deg,#00993d 0px,#059919 216px,#749900 305px,#999300 332px,#996600 370px)"></i><i style="left:1054px;top:258px;width:373px;height:2px;background:linear-gradient(90deg,#00993e 0px,#05991a 215px,#739902 303px,#999400 330px,#996200 373px)"></i><i style="left:1054px;top:260px;width:375px;height:2px;background:linear-gradient(90deg,#00993f 0px,#04991b 214px,#739903 302px,#999300 329px,#995f00 375px)"></i><i style="left:1054px;top:262px;width:378px;height:2px;background:linear-gradient(90deg,#009940 0px,#05991c 214px,#749905 301px,#999400 327px,#995c00 377px,#995b00 378px)"></i><i style="left:1055px;top:264px;width:379px;height:2px;background:linear-gradient(90deg,#009941 0px,#05991e 212px,#749906 299px,#999300 325px,#995b00 375px,#995800 379px)"></i><i style="left:1055px;top:266px;width:382px;height:2px;background:linear-gradient(90deg,#009942 0px,#04991f 211px,#739908 297px,#999400 323px,#995c00 372px,#995400 382px)"></i><i style="left:1055px;top:268px;width:384px;height:2px;background:linear-gradient(90deg,#009943 0px,#049921 210px,#72990a 295px,#999300 322px,#995b00 371px,#995200 384px)"></i><i style="left:1056px;top:270px;width:385px;height:2px;background:linear-gradient(90deg,#009944 0px,#059922 209px,#74990b 294px,#999402 319px,#995c00 367px,#994f00 385px)"></i><i style="left:1056px;top:272px;width:388px;height:2px;background:linear-gradient(90deg,#009945 0px,#059923 208px,#73990d 292px,#999304 318px,#995b00 366px,#994c00 388px)"></i><i style="left:1056px;top:274px;width:390px;height:2px;background:linear-gradient(90deg,#009946 0px,#049925 207px,#74990e 291px,#999405 316px,#995c00 364px,#994900 390px)"></i><i style="left:1056px;top:276px;width:393px;height:2px;background:linear-gradient(90deg,#009947 0px,#059926 207px,#759910 290px,#999307 315px,#995b00 363px,#994600 393px)"></i><i style="left:1057px;top:278px;width:394px;height:2px;background:linear-gradient(90deg,#009948 0px,#059927 205px,#739912 287px,#999409 312px,#995c00 359px,#994400 394px)"></i><i style="left:1057px;top:280px;width:397px;height:2px;background:linear-gradient(90deg,#009949 0px,#049929 204px,#749913 286px,#99930b 311px,#995b00 358px,#994100 397px)"></i><i style="left:1057px;top:282px;width:399px;height:2px;background:linear-gradient(90deg,#00994a 0px,#04992a 203px,#739915 284px,#99940d 309px,#995c00 355px,#993f00 399px)"></i><i style="left:1058px;top:284px;width:401px;height:2px;background:linear-gradient(90deg,#00994b 0px,#05992c 202px,#739917 282px,#99950f 306px,#995c00 352px,#993c00 401px)"></i><i style="left:1058px;top:286px;width:403px;height:2px;background:linear-gradient(90deg,#00994c 0px,#05992d 201px,#749919 281px,#999410 305px,#995b00 351px,#993a00 403px)"></i><i style="left:1058px;top:288px;width:406px;height:2px;background:linear-gradient(90deg,#00994d 0px,#04992f 200px,#73991b 279px,#999512 303px,#995c01 348px,#993700 406px)"></i><i style="left:1058px;top:290px;width:408px;height:2px;background:linear-gradient(90deg,#00994f 0px,#049931 199px,#73991d 278px,#999414 302px,#995c02 347px,#993500 408px)"></i><i style="left:1059px;top:292px;width:410px;height:2px;background:linear-gradient(90deg,#009950 0px,#059932 198px,#74991e 276px,#999516 299px,#995d04 343px,#993300 410px)"></i><i style="left:1059px;top:294px;width:412px;height:2px;background:linear-gradient(90deg,#009951 0px,#049934 197px,#739920 274px,#999418 298px,#995c05 342px,#993100 412px)"></i><i style="left:1059px;top:296px;width:415px;height:2px;background:linear-gradient(90deg,#009952 0px,#049935 196px,#739922 273px,#99951a 296px,#995d07 339px,#992f00 415px)"></i><i style="left:1060px;top:298px;width:416px;height:2px;background:linear-gradient(90deg,#009953 0px,#059937 195px,#749924 271px,#99941c 294px,#995c08 337px,#992e00 415px,#992d00 416px)"></i><i style="left:1060px;top:300px;width:419px;height:2px;background:linear-gradient(90deg,#009955 0px,#059939 194px,#739926 269px,#99941e 292px,#995c09 335px,#993000 406px,#992b00 419px)"></i><i style="left:1060px;top:302px;width:421px;height:2px;background:linear-gradient(90deg,#009956 0px,#04993b 193px,#739928 268px,#999320 291px,#995b0a 334px,#993000 405px,#992900 421px)"></i><i style="left:1061px;top:304px;width:423px;height:2px;background:linear-gradient(90deg,#009957 0px,#04993c 191px,#72992b 265px,#999423 288px,#995c0c 330px,#992f00 402px,#992700 423px)"></i><i style="left:1061px;top:306px;width:425px;height:2px;background:linear-gradient(90deg,#009959 0px,#05993e 191px,#75992c 265px,#999324 287px,#995c0e 329px,#992e00 403px,#992600 425px)"></i><i style="left:1061px;top:308px;width:428px;height:2px;background:linear-gradient(90deg,#00995a 0px,#059940 190px,#73992f 263px,#999427 285px,#995d10 326px,#992e00 400px,#992400 428px)"></i><i style="left:1062px;top:310px;width:429px;height:2px;background:linear-gradient(90deg,#00995b 0px,#049942 188px,#729931 260px,#999329 283px,#995c11 324px,#992d00 399px,#992300 429px)"></i><i style="left:1062px;top:312px;width:432px;height:2px;background:linear-gradient(90deg,#00995d 0px,#059944 188px,#759933 260px,#99942c 281px,#995c13 322px,#992d00 396px,#992100 432px)"></i><i style="left:1063px;top:314px;width:433px;height:2px;background:linear-gradient(90deg,#00995e 0px,#059946 186px,#739936 257px,#99932e 279px,#995b14 320px,#992d00 394px,#991f00 433px)"></i><i style="left:1063px;top:316px;width:436px;height:2px;background:linear-gradient(90deg,#00995f 0px,#049948 185px,#749938 256px,#999430 277px,#995c16 317px,#992e00 389px,#991e00 436px)"></i><i style="left:1063px;top:318px;width:438px;height:2px;background:linear-gradient(90deg,#009961 0px,#04994a 184px,#73993a 254px,#999533 275px,#995d18 314px,#992e02 385px,#991c00 438px)"></i><i style="left:1064px;top:320px;width:440px;height:2px;background:linear-gradient(90deg,#009962 0px,#05994b 183px,#73993d 252px,#999435 273px,#995c1a 312px,#992e02 383px,#991b00 440px)"></i><i style="left:1064px;top:322px;width:442px;height:2px;background:linear-gradient(90deg,#009964 0px,#05994e 182px,#74993f 251px,#999538 271px,#995d1b 310px,#992e04 380px,#991900 442px)"></i><i style="left:1064px;top:324px;width:445px;height:2px;background:linear-gradient(90deg,#009965 0px,#049950 181px,#739942 249px,#99943a 270px,#995c1d 309px,#992d04 379px,#991800 445px)"></i><i style="left:1065px;top:326px;width:446px;height:2px;background:linear-gradient(90deg,#009967 0px,#049952 179px,#739944 247px,#99953d 267px,#995d1f 305px,#992e06 373px,#991700 446px)"></i><i style="left:1065px;top:328px;width:449px;height:2px;background:linear-gradient(90deg,#009968 0px,#059954 179px,#749947 246px,#999440 266px,#995c21 304px,#992d07 373px,#991500 449px)"></i><i style="left:1066px;top:330px;width:450px;height:2px;background:linear-gradient(90deg,#00996a 0px,#049956 177px,#739949 243px,#999543 263px,#995d23 300px,#992e09 367px,#991400 450px)"></i><i style="left:1066px;top:332px;width:453px;height:2px;background:linear-gradient(90deg,#00996c 0px,#049958 176px,#73994c 242px,#999445 262px,#995c25 299px,#992e0a 366px,#991300 453px)"></i><i style="left:1066px;top:334px;width:455px;height:2px;background:linear-gradient(90deg,#00996d 0px,#05995b 176px,#74994f 241px,#999548 260px,#995c27 297px,#992e0b 363px,#991200 455px)"></i><i style="left:1067px;top:336px;width:456px;height:2px;background:linear-gradient(90deg,#00996f 0px,#05995d 174px,#739952 238px,#99944b 258px,#995b28 295px,#992d0c 362px,#991000 456px)"></i><i style="left:1067px;top:338px;width:459px;height:2px;background:linear-gradient(90deg,#009971 0px,#04995f 173px,#739954 237px,#99954e 256px,#995d2b 292px,#992e0e 357px,#991000 455px,#990f00 459px)"></i><i style="left:1068px;top:340px;width:460px;height:2px;background:linear-gradient(90deg,#009972 0px,#049962 171px,#729958 234px,#999450 254px,#995c2c 290px,#992d0f 355px,#990f00 456px,#990e00 460px)"></i><i style="left:1068px;top:342px;width:463px;height:2px;background:linear-gradient(90deg,#009974 0px,#059964 171px,#73995a 233px,#999554 252px,#995d2f 287px,#992f11 350px,#990e00 456px,#990d00 463px)"></i><i style="left:1068px;top:344px;width:465px;height:2px;background:linear-gradient(90deg,#009976 0px,#049967 170px,#73995d 232px,#999456 251px,#995c31 286px,#992e12 349px,#990d00 458px,#990c00 465px)"></i><i style="left:1069px;top:346px;width:467px;height:2px;background:linear-gradient(90deg,#009978 0px,#049969 168px,#729961 229px,#99955a 248px,#995c33 283px,#992e13 346px,#990c00 459px,#990b00 467px)"></i><i style="left:1069px;top:348px;width:469px;height:2px;background:linear-gradient(90deg,#00997a 0px,#05996c 168px,#759963 229px,#99945d 247px,#995b35 282px,#992d14 345px,#990b00 461px,#990a00 469px)"></i><i style="left:1070px;top:350px;width:471px;height:2px;background:linear-gradient(90deg,#00997b 0px,#05996f 166px,#739967 226px,#999561 244px,#995c38 278px,#992e16 339px,#990b00 459px,#990900 471px)"></i><i style="left:1070px;top:352px;width:473px;height:2px;background:linear-gradient(90deg,#00997d 0px,#049971 165px,#72996a 224px,#999363 243px,#995b3a 277px,#992d17 338px,#990a00 460px,#990800 473px)"></i><i style="left:1071px;top:354px;width:475px;height:2px;background:linear-gradient(90deg,#00997f 0px,#049974 163px,#73996d 222px,#999568 240px,#995d3d 273px,#992e1a 333px,#990900 458px,#990700 475px)"></i><i style="left:1071px;top:356px;width:477px;height:2px;background:linear-gradient(90deg,#009981 0px,#059977 163px,#739971 221px,#99936a 239px,#995c3f 272px,#992d1b 332px,#990900 457px,#990600 477px)"></i><i style="left:1072px;top:358px;width:479px;height:2px;background:linear-gradient(90deg,#009983 0px,#04997a 161px,#749974 219px,#99946f 236px,#995c41 269px,#992e1c 328px,#990900 452px,#990500 479px)"></i><i style="left:1072px;top:360px;width:481px;height:2px;background:linear-gradient(90deg,#009985 0px,#04997d 160px,#739978 217px,#999371 235px,#995b43 268px,#992d1e 327px,#990800 451px,#990400 481px)"></i><i style="left:1072px;top:362px;width:484px;height:2px;background:linear-gradient(90deg,#009987 0px,#049980 159px,#71997c 215px,#999476 233px,#995c47 265px,#992e20 323px,#990901 444px,#990300 484px)"></i><i style="left:1073px;top:364px;width:485px;height:2px;background:linear-gradient(90deg,#00998a 0px,#059983 158px,#74997f 214px,#999379 231px,#995b49 263px,#992d21 321px,#990802 442px,#990200 485px)"></i><i style="left:1073px;top:366px;width:488px;height:2px;background:linear-gradient(90deg,#00998c 0px,#049986 157px,#739983 212px,#99947e 229px,#995d4d 260px,#992e24 316px,#990904 433px,#990100 488px)"></i><i style="left:1074px;top:368px;width:489px;height:2px;background:linear-gradient(90deg,#00998e 0px,#04998a 155px,#739987 210px,#999380 227px,#995b4f 258px,#992d25 314px,#990904 432px,#990000 489px)"></i><i style="left:1074px;top:370px;width:492px;height:2px;background:linear-gradient(90deg,#009990 0px,#05998d 155px,#74998b 209px,#999486 225px,#995c52 256px,#992e27 311px,#990905 427px,#990000 492px)"></i><i style="left:1075px;top:372px;width:493px;height:2px;background:linear-gradient(90deg,#009993 0px,#049990 153px,#73998f 206px,#99958b 222px,#995d56 252px,#992e2a 306px,#990a07 418px,#990000 493px)"></i><i style="left:1075px;top:374px;width:496px;height:2px;background:linear-gradient(90deg,#009995 0px,#049994 152px,#739993 205px,#99948e 221px,#995c58 251px,#992e2b 305px,#990908 418px,#990000 496px)"></i><i style="left:1076px;top:376px;width:497px;height:2px;background:linear-gradient(90deg,#009997 0px,#039997 150px,#729997 202px,#999594 218px,#995e5c 247px,#992f2e 299px,#990a0a 407px,#990000 497px)"></i><i style="left:1076px;top:378px;width:500px;height:2px;background:linear-gradient(90deg,#009899 0px,#059799 150px,#739699 202px,#999194 218px,#995a5c 248px,#992c2d 302px,#990809 415px,#990000 500px)"></i><i style="left:1077px;top:380px;width:501px;height:2px;background:linear-gradient(90deg,#009699 0px,#049499 148px,#739299 201px,#998d94 217px,#99575c 247px,#992b2e 301px,#990709 414px,#990000 501px)"></i><i style="left:1077px;top:382px;width:504px;height:2px;background:linear-gradient(90deg,#009399 0px,#039099 147px,#738e99 201px,#998995 217px,#99555d 247px,#99292f 301px,#99070a 414px,#990000 504px)"></i><i style="left:1078px;top:384px;width:505px;height:2px;background:linear-gradient(90deg,#009199 0px,#058d99 146px,#738a99 200px,#998695 216px,#99525e 246px,#99282f 300px,#99060a 413px,#990000 505px)"></i><i style="left:1078px;top:386px;width:508px;height:2px;background:linear-gradient(90deg,#008e99 0px,#048999 145px,#748699 200px,#998295 216px,#994f5d 247px,#99252e 303px,#99040a 419px,#990000 508px)"></i><i style="left:1079px;top:388px;width:509px;height:2px;background:linear-gradient(90deg,#008c99 0px,#038699 143px,#748299 199px,#997c93 216px,#994a5b 248px,#99222d 306px,#990208 427px,#990000 509px)"></i><i style="left:1079px;top:390px;width:512px;height:2px;background:linear-gradient(90deg,#008a99 0px,#058399 143px,#747e99 199px,#997894 216px,#99485c 248px,#99212d 306px,#990109 427px,#990000 512px)"></i><i style="left:1080px;top:392px;width:513px;height:2px;background:linear-gradient(90deg,#008799 0px,#048099 141px,#747b99 198px,#997594 215px,#99465c 247px,#991f2e 305px,#990109 426px,#990000 513px)"></i><i style="left:1080px;top:394px;width:516px;height:2px;background:linear-gradient(90deg,#008599 0px,#057d99 141px,#747799 198px,#997194 215px,#99445d 247px,#991e2e 305px,#99000a 426px,#990000 516px)"></i><i style="left:1081px;top:396px;width:517px;height:2px;background:linear-gradient(90deg,#008399 0px,#057a99 139px,#747399 197px,#996e95 214px,#99415c 247px,#991c2e 306px,#990009 430px,#990000 517px)"></i><i style="left:1081px;top:398px;width:520px;height:2px;background:linear-gradient(90deg,#008199 0px,#047799 138px,#747099 197px,#996b95 214px,#993f5d 247px,#991b2e 306px,#99000a 430px,#990000 520px)"></i><i style="left:1082px;top:400px;width:521px;height:2px;background:linear-gradient(90deg,#007e99 0px,#057499 137px,#746d99 196px,#996795 213px,#993d5d 246px,#99192f 306px,#99000a 429px,#990000 521px)"></i><i style="left:1083px;top:402px;width:523px;height:2px;background:linear-gradient(90deg,#007c99 0px,#047199 135px,#746999 195px,#996293 213px,#99395c 247px,#99172d 309px,#99000a 429px,#990000 523px)"></i><i style="left:1083px;top:404px;width:525px;height:2px;background:linear-gradient(90deg,#007a99 0px,#046f99 134px,#726699 194px,#995f94 213px,#99375c 247px,#99152e 309px,#99000b 426px,#990000 525px)"></i><i style="left:1084px;top:406px;width:527px;height:2px;background:linear-gradient(90deg,#007899 0px,#056c99 133px,#756399 194px,#995c94 212px,#99345b 247px,#99142d 310px,#99000c 423px,#990000 527px)"></i><i style="left:1084px;top:408px;width:529px;height:2px;background:linear-gradient(90deg,#007699 0px,#046999 132px,#756099 194px,#995994 212px,#99325c 247px,#99122e 310px,#99000d 420px,#990000 529px)"></i><i style="left:1085px;top:410px;width:531px;height:2px;background:linear-gradient(90deg,#007499 0px,#046799 130px,#735d99 192px,#995694 211px,#99315d 246px,#99112e 309px,#99000e 416px,#990000 531px)"></i><i style="left:1085px;top:412px;width:533px;height:2px;background:linear-gradient(90deg,#007299 0px,#056499 130px,#755999 193px,#995395 211px,#992f5d 246px,#99102f 309px,#99000f 412px,#990000 533px)"></i><i style="left:1086px;top:414px;width:535px;height:2px;background:linear-gradient(90deg,#007099 0px,#046299 128px,#735799 191px,#995095 210px,#992c5d 246px,#990e2e 311px,#990010 410px,#990000 535px)"></i><i style="left:1086px;top:416px;width:537px;height:2px;background:linear-gradient(90deg,#006e99 0px,#045f99 127px,#735499 191px,#994c93 211px,#99295b 248px,#990c2d 315px,#990010 410px,#990000 537px)"></i><i style="left:1087px;top:418px;width:534px;height:2px;background:linear-gradient(90deg,#006c99 0px,#055d99 126px,#755199 191px,#994a93 210px,#99275b 247px,#990b2d 314px,#990011 407px,#990000 534px)"></i><i style="left:1088px;top:420px;width:527px;height:2px;background:linear-gradient(90deg,#006999 0px,#045a99 124px,#734e99 189px,#994794 209px,#99265c 246px,#990a2e 313px,#990011 406px,#990000 527px)"></i><i style="left:1088px;top:422px;width:522px;height:2px;background:linear-gradient(90deg,#006899 0px,#045899 123px,#734b99 189px,#994494 209px,#99245c 246px,#99092e 313px,#990012 407px,#990001 522px)"></i><i style="left:1089px;top:424px;width:516px;height:2px;background:linear-gradient(90deg,#006699 0px,#055699 122px,#734999 188px,#994294 208px,#99225c 246px,#99082e 314px,#99000f 419px,#990002 516px)"></i><i style="left:1089px;top:426px;width:510px;height:2px;background:linear-gradient(90deg,#006499 0px,#045499 121px,#734699 188px,#993f95 208px,#99205c 246px,#99072e 314px,#99000b 444px,#990003 510px)"></i><i style="left:1090px;top:428px;width:504px;height:2px;background:linear-gradient(90deg,#006299 0px,#045299 119px,#744399 187px,#993d95 207px,#991e5d 245px,#99052e 314px,#990009 458px,#990004 504px)"></i><i style="left:1091px;top:430px;width:498px;height:2px;background:linear-gradient(90deg,#006099 0px,#054f99 118px,#744199 186px,#993a95 206px,#991d5d 244px,#99042f 313px,#99000a 457px,#990004 498px)"></i><i style="left:1091px;top:432px;width:492px;height:2px;background:linear-gradient(90deg,#005e99 0px,#044d99 117px,#743e99 186px,#993793 207px,#991a5c 246px,#99032d 317px,#990009 466px,#990005 492px)"></i><i style="left:1092px;top:434px;width:486px;height:2px;background:linear-gradient(90deg,#005c99 0px,#044b99 115px,#743c99 185px,#993494 206px,#99185b 246px,#99012d 318px,#990009 469px,#990006 486px)"></i><i style="left:1092px;top:436px;width:481px;height:2px;background:linear-gradient(90deg,#005a99 0px,#054999 115px,#743999 185px,#993294 206px,#99175c 246px,#99002e 318px,#990009 469px,#990007 481px)"></i><i style="left:1093px;top:438px;width:474px;height:2px;background:linear-gradient(90deg,#005899 0px,#044799 113px,#743799 184px,#993094 205px,#99155c 245px,#99002e 317px,#990009 468px,#990009 474px)"></i><i style="left:1094px;top:440px;width:468px;height:2px;background:linear-gradient(90deg,#005699 0px,#054599 112px,#743599 183px,#992d95 204px,#99145d 244px,#99002e 316px,#99000a 467px,#99000a 468px)"></i><i style="left:1094px;top:442px;width:463px;height:2px;background:linear-gradient(90deg,#005599 0px,#054399 111px,#743299 183px,#992b95 204px,#99125c 245px,#99002e 319px,#99000b 463px)"></i><i style="left:1095px;top:444px;width:456px;height:2px;background:linear-gradient(90deg,#005399 0px,#044199 109px,#743099 182px,#992995 203px,#99105d 244px,#99002e 318px,#99000c 456px)"></i><i style="left:1096px;top:446px;width:450px;height:2px;background:linear-gradient(90deg,#005199 0px,#053f99 108px,#742e99 181px,#992693 203px,#990e5b 245px,#99002e 319px,#99000d 450px)"></i><i style="left:1096px;top:448px;width:445px;height:2px;background:linear-gradient(90deg,#004f99 0px,#053e99 107px,#742c99 181px,#992494 203px,#990d5c 245px,#99002f 317px,#99000e 445px)"></i><i style="left:1097px;top:450px;width:438px;height:2px;background:linear-gradient(90deg,#004e99 0px,#043c99 105px,#752a99 180px,#992294 202px,#990b5c 244px,#990030 314px,#99000f 438px)"></i><i style="left:1098px;top:452px;width:432px;height:2px;background:linear-gradient(90deg,#004c99 0px,#053a99 104px,#752799 179px,#991f94 201px,#990a5c 244px,#990031 313px,#990011 432px)"></i><i style="left:1098px;top:454px;width:427px;height:2px;background:linear-gradient(90deg,#004a99 0px,#053899 103px,#752599 179px,#991d94 201px,#99085c 244px,#990030 317px,#990012 427px)"></i><i style="left:1099px;top:456px;width:420px;height:2px;background:linear-gradient(90deg,#004899 0px,#043799 101px,#732499 177px,#991b95 200px,#99075d 243px,#99002e 321px,#990013 420px)"></i><i style="left:1100px;top:458px;width:414px;height:2px;background:linear-gradient(90deg,#004799 0px,#053599 100px,#752199 177px,#991993 200px,#99055b 244px,#99002d 324px,#990015 414px)"></i><i style="left:1101px;top:460px;width:408px;height:2px;background:linear-gradient(90deg,#004599 0px,#053399 98px,#751f99 176px,#991793 199px,#99045c 243px,#99002d 323px,#990016 408px)"></i><i style="left:1101px;top:462px;width:402px;height:2px;background:linear-gradient(90deg,#004399 0px,#043299 97px,#731e99 175px,#991594 199px,#99025b 244px,#99002d 325px,#990018 402px)"></i><i style="left:1102px;top:464px;width:396px;height:2px;background:linear-gradient(90deg,#004299 0px,#053099 96px,#751b99 175px,#991394 198px,#99015c 243px,#99002d 324px,#990019 396px)"></i><i style="left:1103px;top:466px;width:390px;height:2px;background:linear-gradient(90deg,#004099 0px,#052f99 94px,#731a99 173px,#991194 197px,#99005c 242px,#99002e 323px,#99001a 390px)"></i><i style="left:1104px;top:468px;width:383px;height:2px;background:linear-gradient(90deg,#003e99 0px,#042d99 92px,#731899 172px,#990f94 196px,#99005d 241px,#99002e 323px,#99001c 383px)"></i><i style="left:1104px;top:470px;width:378px;height:2px;background:linear-gradient(90deg,#003d99 0px,#052b99 92px,#751699 173px,#990e95 196px,#99005c 242px,#99002e 325px,#99001e 378px)"></i><i style="left:1105px;top:472px;width:372px;height:2px;background:linear-gradient(90deg,#003b99 0px,#052a99 90px,#741499 171px,#990b93 196px,#99005b 243px,#99002d 328px,#99001f 372px)"></i><i style="left:1106px;top:474px;width:365px;height:2px;background:linear-gradient(90deg,#003999 0px,#052899 89px,#751299 171px,#990a93 195px,#99005b 242px,#99002d 327px,#990021 365px)"></i><i style="left:1107px;top:476px;width:359px;height:2px;background:linear-gradient(90deg,#003899 0px,#052799 87px,#741199 169px,#990894 194px,#99005c 241px,#99002d 326px,#990023 359px)"></i><i style="left:1108px;top:478px;width:353px;height:2px;background:linear-gradient(90deg,#003699 0px,#052699 85px,#740f99 168px,#990694 193px,#99005c 240px,#99002e 325px,#990025 353px)"></i><i style="left:1108px;top:480px;width:347px;height:2px;background:linear-gradient(90deg,#003599 0px,#052499 85px,#760d99 169px,#990494 193px,#99005c 241px,#99002d 327px,#990027 347px)"></i><i style="left:1109px;top:482px;width:341px;height:2px;background:linear-gradient(90deg,#003399 0px,#052399 83px,#740c99 167px,#990394 192px,#99005c 240px,#99002d 327px,#990029 341px)"></i><i style="left:1110px;top:484px;width:335px;height:2px;background:linear-gradient(90deg,#003299 0px,#042199 81px,#740a99 166px,#990194 191px,#99005c 239px,#99002e 326px,#99002b 335px)"></i><i style="left:1111px;top:486px;width:328px;height:2px;background:linear-gradient(90deg,#003099 0px,#052099 80px,#740899 165px,#990095 190px,#99005d 238px,#99002e 325px,#99002d 328px)"></i><i style="left:1112px;top:488px;width:322px;height:2px;background:linear-gradient(90deg,#002e99 0px,#051f99 78px,#740799 164px,#990093 190px,#99005c 239px,#99002f 322px)"></i><i style="left:1113px;top:490px;width:316px;height:2px;background:linear-gradient(90deg,#002d99 0px,#041d99 76px,#740599 163px,#990094 189px,#99005b 239px,#990031 316px)"></i><i style="left:1114px;top:492px;width:309px;height:2px;background:linear-gradient(90deg,#002b99 0px,#051c99 75px,#740399 162px,#990094 188px,#99005c 238px,#990034 309px)"></i><i style="left:1114px;top:494px;width:304px;height:2px;background:linear-gradient(90deg,#002a99 0px,#051b99 74px,#740299 162px,#990094 188px,#99005c 238px,#990037 304px)"></i><i style="left:1115px;top:496px;width:298px;height:2px;background:linear-gradient(90deg,#002899 0px,#041999 72px,#740099 161px,#990094 187px,#99005c 237px,#990039 298px)"></i><i style="left:1116px;top:498px;width:291px;height:2px;background:linear-gradient(90deg,#002799 0px,#051899 71px,#750099 160px,#990094 186px,#99005c 237px,#99003c 291px)"></i><i style="left:1117px;top:500px;width:285px;height:2px;background:linear-gradient(90deg,#002599 0px,#051799 69px,#750099 159px,#990095 185px,#99005c 236px,#99003f 285px)"></i><i style="left:1118px;top:502px;width:279px;height:2px;background:linear-gradient(90deg,#002499 0px,#051699 68px,#750099 158px,#990093 185px,#99005b 237px,#990041 279px)"></i><i style="left:1119px;top:504px;width:272px;height:2px;background:linear-gradient(90deg,#002399 0px,#051499 66px,#750099 157px,#990093 184px,#99005b 236px,#990045 272px)"></i><i style="left:1120px;top:506px;width:266px;height:2px;background:linear-gradient(90deg,#002199 0px,#051399 64px,#750099 156px,#990094 183px,#99005c 235px,#990048 266px)"></i><i style="left:1121px;top:508px;width:260px;height:2px;background:linear-gradient(90deg,#002099 0px,#051299 63px,#730099 154px,#990094 182px,#99005b 235px,#99004b 260px)"></i><i style="left:1122px;top:510px;width:253px;height:2px;background:linear-gradient(90deg,#001e99 0px,#051199 61px,#6f0099 150px,#990094 181px,#99005c 234px,#99004f 253px)"></i><i style="left:1123px;top:512px;width:247px;height:2px;background:linear-gradient(90deg,#001d99 0px,#051099 59px,#6a0099 145px,#990094 180px,#99005c 233px,#990053 247px)"></i><i style="left:1124px;top:514px;width:241px;height:2px;background:linear-gradient(90deg,#001b99 0px,#050f99 58px,#660099 141px,#990095 179px,#99005d 232px,#990056 241px)"></i><i style="left:1125px;top:516px;width:234px;height:2px;background:linear-gradient(90deg,#001a99 0px,#050e99 56px,#620099 137px,#990095 178px,#99005c 232px,#99005b 234px)"></i><i style="left:1126px;top:518px;width:228px;height:2px;background:linear-gradient(90deg,#001899 0px,#050d99 54px,#5e0099 133px,#990095 177px,#99005f 228px)"></i><i style="left:1127px;top:520px;width:222px;height:2px;background:linear-gradient(90deg,#001799 0px,#050b99 53px,#5c0099 130px,#990094 177px,#990063 222px)"></i><i style="left:1128px;top:522px;width:215px;height:2px;background:linear-gradient(90deg,#001699 0px,#050a99 51px,#5b0099 128px,#990094 176px,#990068 215px)"></i><i style="left:1129px;top:524px;width:209px;height:2px;background:linear-gradient(90deg,#001499 0px,#060999 50px,#5c0099 128px,#990094 175px,#99006d 209px)"></i><i style="left:1130px;top:526px;width:203px;height:2px;background:linear-gradient(90deg,#001399 0px,#050899 48px,#610099 131px,#990094 174px,#990072 203px)"></i><i style="left:1131px;top:528px;width:196px;height:2px;background:linear-gradient(90deg,#001299 0px,#050799 46px,#6f0099 140px,#990094 173px,#990078 196px)"></i><i style="left:1132px;top:530px;width:190px;height:2px;background:linear-gradient(90deg,#001099 0px,#060699 45px,#750099 144px,#990093 173px,#99007e 190px)"></i><i style="left:1133px;top:532px;width:184px;height:2px;background:linear-gradient(90deg,#000f99 0px,#050599 43px,#760099 143px,#990093 172px,#990084 184px)"></i><i style="left:1134px;top:534px;width:177px;height:2px;background:linear-gradient(90deg,#000e99 0px,#060499 42px,#760099 142px,#990094 171px,#99008c 177px)"></i><i style="left:1135px;top:536px;width:171px;height:2px;background:linear-gradient(90deg,#000c99 0px,#060399 40px,#760099 141px,#990094 170px,#990092 171px)"></i><i style="left:1137px;top:538px;width:164px;height:2px;background:linear-gradient(90deg,#000b99 0px,#060299 38px,#760099 139px,#980099 164px)"></i><i style="left:1138px;top:540px;width:157px;height:2px;background:linear-gradient(90deg,#000999 0px,#060199 36px,#760099 138px,#900099 157px)"></i><i style="left:1139px;top:542px;width:151px;height:2px;background:linear-gradient(90deg,#000899 0px,#050099 34px,#760099 137px,#890099 151px)"></i><i style="left:1141px;top:544px;width:144px;height:2px;background:linear-gradient(90deg,#000799 0px,#060099 32px,#760099 135px,#820099 144px)"></i><i style="left:1142px;top:546px;width:137px;height:2px;background:linear-gradient(90deg,#000599 0px,#070099 31px,#760099 134px,#7a0099 137px)"></i><i style="left:1143px;top:548px;width:131px;height:2px;background:linear-gradient(90deg,#000499 0px,#060099 29px,#730099 131px)"></i><i style="left:1145px;top:550px;width:124px;height:2px;background:linear-gradient(90deg,#000299 0px,#070099 27px,#6d0099 124px)"></i><i style="left:1146px;top:552px;width:117px;height:2px;background:linear-gradient(90deg,#000199 0px,#070099 26px,#660099 117px)"></i><i style="left:1148px;top:554px;width:110px;height:2px;background:linear-gradient(90deg,#000099 0px,#080099 24px,#600099 110px)"></i><i style="left:1150px;top:556px;width:103px;height:2px;background:linear-gradient(90deg,#000099 0px,#090099 23px,#5a0099 103px)"></i><i style="left:1151px;top:558px;width:96px;height:2px;background:linear-gradient(90deg,#000099 0px,#0c0099 24px,#540099 96px)"></i><i style="left:1153px;top:560px;width:89px;height:2px;background:linear-gradient(90deg,#000099 0px,#130099 29px,#4f0099 89px)"></i><i style="left:1155px;top:562px;width:82px;height:2px;background:linear-gradient(90deg,#000099 0px,#480099 81px,#490099 82px)"></i><i style="left:1157px;top:564px;width:74px;height:2px;background:linear-gradient(90deg,#000099 0px,#430099 74px)"></i><i style="left:1160px;top:566px;width:66px;height:2px;background:linear-gradient(90deg,#010099 0px,#3e0099 66px)"></i><i style="left:1162px;top:568px;width:59px;height:2px;background:linear-gradient(90deg,#030099 0px,#3a0099 59px)"></i><i style="left:1165px;top:570px;width:50px;height:2px;background:linear-gradient(90deg,#060099 0px,#340099 50px)"></i><i style="left:1168px;top:572px;width:42px;height:2px;background:linear-gradient(90deg,#090099 0px,#300099 42px)"></i><i style="left:1171px;top:574px;width:34px;height:2px;background:linear-gradient(90deg,#0d0099 0px,#2b0099 34px)"></i><i style="left:1173px;top:576px;width:26px;height:2px;background:linear-gradient(90deg,#0f0099 0px,#260099 26px)"></i><i style="left:1176px;top:578px;width:18px;height:2px;background:linear-gradient(90deg,#120099 0px,#220099 18px)"></i><i style="left:1179px;top:580px;width:10px;height:2px;background:linear-gradient(90deg,#150099 0px,#1e0099 10px)"></i></div><div class="a" style="left:0;top:0;width:1713px;height:883px;clip-path:polygon(1546.9px 377.2px,1282.7px 207.8px,1166.2px 546.6px)"><i style="left:1279px;top:208px;width:9px;height:2px;background:linear-gradient(90deg,#00ff02 0px,#09ff00 9px)"></i><i style="left:1278px;top:210px;width:13px;height:2px;background:linear-gradient(90deg,#00ff04 0px,#0fff00 13px)"></i><i style="left:1277px;top:212px;width:17px;height:2px;background:linear-gradient(90deg,#00ff05 0px,#15ff00 17px)"></i><i style="left:1277px;top:214px;width:21px;height:2px;background:linear-gradient(90deg,#00ff07 0px,#1cff00 21px)"></i><i style="left:1276px;top:216px;width:25px;height:2px;background:linear-gradient(90deg,#00ff08 0px,#22ff00 25px)"></i><i style="left:1275px;top:218px;width:29px;height:2px;background:linear-gradient(90deg,#00ff0a 0px,#28ff00 29px)"></i><i style="left:1275px;top:220px;width:32px;height:2px;background:linear-gradient(90deg,#00ff0b 0px,#2fff00 32px)"></i><i style="left:1274px;top:222px;width:36px;height:2px;background:linear-gradient(90deg,#00ff0d 0px,#35ff00 36px)"></i><i style="left:1273px;top:224px;width:40px;height:2px;background:linear-gradient(90deg,#00ff0f 0px,#3cff00 40px)"></i><i style="left:1273px;top:226px;width:43px;height:2px;background:linear-gradient(90deg,#00ff10 0px,#43ff00 43px)"></i><i style="left:1272px;top:228px;width:47px;height:2px;background:linear-gradient(90deg,#00ff12 0px,#4aff00 47px)"></i><i style="left:1271px;top:230px;width:51px;height:2px;background:linear-gradient(90deg,#00ff14 0px,#3fff03 41px,#51ff00 51px)"></i><i style="left:1271px;top:232px;width:55px;height:2px;background:linear-gradient(90deg,#00ff15 0px,#5bff00 55px)"></i><i style="left:1270px;top:234px;width:59px;height:2px;background:linear-gradient(90deg,#00ff17 0px,#57ff01 53px,#63ff00 59px)"></i><i style="left:1269px;top:236px;width:63px;height:2px;background:linear-gradient(90deg,#00ff19 0px,#3fff09 40px,#6bff00 63px)"></i><i style="left:1268px;top:238px;width:67px;height:2px;background:linear-gradient(90deg,#00ff1b 0px,#26ff11 26px,#73ff00 67px)"></i><i style="left:1268px;top:240px;width:70px;height:2px;background:linear-gradient(90deg,#00ff1d 0px,#57ff07 52px,#7bff00 70px)"></i><i style="left:1267px;top:242px;width:74px;height:2px;background:linear-gradient(90deg,#00ff1f 0px,#40ff0e 40px,#84ff00 74px)"></i><i style="left:1266px;top:244px;width:78px;height:2px;background:linear-gradient(90deg,#00ff21 0px,#25ff17 25px,#8dff00 78px)"></i><i style="left:1266px;top:246px;width:81px;height:2px;background:linear-gradient(90deg,#00ff22 0px,#57ff0d 51px,#96ff00 81px)"></i><i style="left:1265px;top:248px;width:86px;height:2px;background:linear-gradient(90deg,#00ff24 0px,#40ff14 39px,#a2ff00 86px)"></i><i style="left:1264px;top:250px;width:90px;height:2px;background:linear-gradient(90deg,#00ff26 0px,#26ff1c 25px,#acff00 90px)"></i><i style="left:1264px;top:252px;width:93px;height:2px;background:linear-gradient(90deg,#00ff28 0px,#57ff13 50px,#b6ff00 93px)"></i><i style="left:1263px;top:254px;width:97px;height:2px;background:linear-gradient(90deg,#00ff2a 0px,#3eff1b 37px,#c0ff00 97px)"></i><i style="left:1262px;top:256px;width:101px;height:2px;background:linear-gradient(90deg,#00ff2c 0px,#27ff22 25px,#b7ff02 93px,#cbff00 101px)"></i><i style="left:1262px;top:258px;width:104px;height:2px;background:linear-gradient(90deg,#00ff2e 0px,#57ff1a 49px,#d6ff00 104px)"></i><i style="left:1261px;top:260px;width:108px;height:2px;background:linear-gradient(90deg,#00ff30 0px,#3fff21 37px,#d0ff02 101px,#e2ff00 108px)"></i><i style="left:1260px;top:262px;width:112px;height:2px;background:linear-gradient(90deg,#00ff32 0px,#26ff29 24px,#b5ff0a 90px,#eeff00 112px)"></i><i style="left:1260px;top:264px;width:115px;height:2px;background:linear-gradient(90deg,#00ff34 0px,#5aff20 49px,#edff01 110px,#fbff00 115px)"></i><i style="left:1259px;top:266px;width:120px;height:2px;background:linear-gradient(90deg,#00ff37 0px,#3fff28 36px,#d0ff0a 99px,#fffa00 118px,#fff400 120px)"></i><i style="left:1258px;top:268px;width:124px;height:2px;background:linear-gradient(90deg,#00ff39 0px,#27ff30 24px,#b7ff12 89px,#fffb02 117px,#ffe800 124px)"></i><i style="left:1257px;top:270px;width:128px;height:2px;background:linear-gradient(90deg,#00ff3b 0px,#19ff35 17px,#a9ff17 83px,#fffc05 116px,#ffdd00 128px)"></i><i style="left:1257px;top:272px;width:131px;height:2px;background:linear-gradient(90deg,#00ff3d 0px,#40ff2f 36px,#d3ff11 98px,#fffb07 115px,#ffd300 131px)"></i><i style="left:1256px;top:274px;width:135px;height:2px;background:linear-gradient(90deg,#00ff40 0px,#26ff37 23px,#b7ff1a 87px,#fffc0b 114px,#ffc900 135px)"></i><i style="left:1255px;top:276px;width:139px;height:2px;background:linear-gradient(90deg,#00ff42 0px,#1aff3c 17px,#a8ff1f 81px,#fffb0d 114px,#ffc000 139px)"></i><i style="left:1255px;top:278px;width:142px;height:2px;background:linear-gradient(90deg,#00ff44 0px,#40ff37 35px,#d1ff1a 95px,#fff910 113px,#ffb700 142px)"></i><i style="left:1254px;top:280px;width:146px;height:2px;background:linear-gradient(90deg,#00ff47 0px,#23ff3f 21px,#b1ff23 83px,#fffb13 112px,#ffb100 145px,#ffaf00 146px)"></i><i style="left:1253px;top:282px;width:151px;height:2px;background:linear-gradient(90deg,#00ff49 0px,#18ff43 16px,#a8ff28 79px,#fffc17 111px,#ffb302 143px,#ffa500 151px)"></i><i style="left:1253px;top:284px;width:154px;height:2px;background:linear-gradient(90deg,#00ff4c 0px,#3fff3f 34px,#d1ff23 93px,#fffb19 110px,#ffb104 142px,#ff9e00 154px)"></i><i style="left:1252px;top:286px;width:158px;height:2px;background:linear-gradient(90deg,#00ff4e 0px,#20ff47 19px,#aeff2d 80px,#fffc1d 109px,#ffb206 141px,#ff9700 158px)"></i><i style="left:1251px;top:288px;width:162px;height:2px;background:linear-gradient(90deg,#00ff51 0px,#19ff4b 16px,#a7ff31 77px,#fffb20 109px,#ffb008 141px,#ff9000 162px)"></i><i style="left:1251px;top:290px;width:165px;height:2px;background:linear-gradient(90deg,#00ff53 0px,#41ff47 34px,#d1ff2c 91px,#fffc23 107px,#ffb30c 138px,#ff8a00 165px)"></i><i style="left:1250px;top:292px;width:169px;height:2px;background:linear-gradient(90deg,#00ff56 0px,#21ff4f 19px,#b1ff36 79px,#fffb26 107px,#ffb10e 138px,#ff8300 169px)"></i><i style="left:1249px;top:294px;width:173px;height:2px;background:linear-gradient(90deg,#00ff59 0px,#1aff53 16px,#a9ff3a 76px,#fffc2a 106px,#ffb210 137px,#ff7d00 173px)"></i><i style="left:1249px;top:296px;width:176px;height:2px;background:linear-gradient(90deg,#00ff5b 0px,#41ff4f 33px,#d2ff36 89px,#fffb2d 105px,#ffb013 136px,#ff7800 176px)"></i><i style="left:1248px;top:298px;width:180px;height:2px;background:linear-gradient(90deg,#00ff5e 0px,#1fff58 18px,#adff40 76px,#fffc31 104px,#ffb316 134px,#ff7200 180px)"></i><i style="left:1247px;top:300px;width:185px;height:2px;background:linear-gradient(90deg,#00ff61 0px,#1bff5c 16px,#a8ff44 74px,#fffb34 104px,#ffb118 134px,#ff7000 181px,#ff6c00 185px)"></i><i style="left:1246px;top:302px;width:189px;height:2px;background:linear-gradient(90deg,#00ff64 0px,#12ff60 12px,#a1ff49 71px,#fffc38 103px,#ffb21b 133px,#ff7102 179px,#ff6700 189px)"></i><i style="left:1246px;top:304px;width:192px;height:2px;background:linear-gradient(90deg,#00ff67 0px,#20ff61 18px,#b0ff4a 75px,#fffb3b 102px,#ffb01e 132px,#ff7004 178px,#ff6300 192px)"></i><i style="left:1245px;top:306px;width:196px;height:2px;background:linear-gradient(90deg,#00ff6a 0px,#17ff65 14px,#a5ff4f 71px,#fffc3f 101px,#ffb321 130px,#ff7207 175px,#ff5e00 196px)"></i><i style="left:1244px;top:308px;width:200px;height:2px;background:linear-gradient(90deg,#00ff6d 0px,#12ff69 12px,#a0ff53 69px,#fffa43 101px,#ffb124 130px,#ff7108 175px,#ff5a00 200px)"></i><i style="left:1244px;top:310px;width:203px;height:2px;background:linear-gradient(90deg,#00ff70 0px,#21ff6a 18px,#afff54 73px,#fffc47 99px,#ffb227 128px,#ff710b 173px,#ff5500 203px)"></i><i style="left:1243px;top:312px;width:207px;height:2px;background:linear-gradient(90deg,#00ff73 0px,#16ff6f 13px,#a4ff5a 69px,#fffa4a 99px,#ffb029 128px,#ff6f0c 173px,#ff5100 207px)"></i><i style="left:1242px;top:314px;width:211px;height:2px;background:linear-gradient(90deg,#00ff76 0px,#13ff72 12px,#a2ff5e 68px,#fffc4f 98px,#ffb32d 126px,#ff7210 169px,#ff4d00 211px)"></i><i style="left:1242px;top:316px;width:215px;height:2px;background:linear-gradient(90deg,#00ff79 0px,#20ff74 17px,#afff60 71px,#fffa52 97px,#ffb130 125px,#ff7011 169px,#ff4900 215px)"></i><i style="left:1241px;top:318px;width:219px;height:2px;background:linear-gradient(90deg,#00ff7c 0px,#14ff79 12px,#a4ff65 67px,#fffc57 96px,#ffb233 124px,#ff7114 167px,#ff4500 219px)"></i><i style="left:1240px;top:320px;width:223px;height:2px;background:linear-gradient(90deg,#00ff80 0px,#14ff7c 12px,#a1ff69 66px,#fffa5a 96px,#ffb036 124px,#ff7016 167px,#ff4200 223px)"></i><i style="left:1240px;top:322px;width:226px;height:2px;background:linear-gradient(90deg,#00ff83 0px,#21ff7e 17px,#b2ff6b 70px,#fffc60 94px,#ffb33a 121px,#ff7219 163px,#ff3e00 226px)"></i><i style="left:1239px;top:324px;width:230px;height:2px;background:linear-gradient(90deg,#00ff87 0px,#12ff83 11px,#a0ff72 64px,#fffa63 94px,#ffb13d 121px,#ff711b 163px,#ff3b00 230px)"></i><i style="left:1238px;top:326px;width:234px;height:2px;background:linear-gradient(90deg,#00ff8a 0px,#12ff87 11px,#a1ff76 64px,#fffc68 93px,#ffb240 120px,#ff721e 161px,#ff3b00 229px,#ff3800 234px)"></i><i style="left:1238px;top:328px;width:237px;height:2px;background:linear-gradient(90deg,#00ff8d 0px,#22ff89 17px,#b1ff78 68px,#fffa6c 92px,#ffb043 119px,#ff6f1f 161px,#ff3901 230px,#ff3500 237px)"></i><i style="left:1237px;top:330px;width:241px;height:2px;background:linear-gradient(90deg,#00ff91 0px,#13ff8e 11px,#a2ff7e 63px,#fffc71 91px,#ffb348 117px,#ff7324 157px,#ff3c04 223px,#ff3200 241px)"></i><i style="left:1236px;top:332px;width:246px;height:2px;background:linear-gradient(90deg,#00ff95 0px,#10ff92 10px,#a0ff82 62px,#fffa75 91px,#ffb14b 117px,#ff7126 157px,#ff3a05 224px,#ff2e00 246px)"></i><i style="left:1235px;top:334px;width:250px;height:2px;background:linear-gradient(90deg,#00ff99 0px,#10ff96 10px,#9dff87 61px,#fffc7b 90px,#ffb24f 116px,#ff7128 156px,#ff3a07 222px,#ff2c00 250px)"></i><i style="left:1235px;top:336px;width:253px;height:2px;background:linear-gradient(90deg,#00ff9c 0px,#14ff9a 11px,#a1ff8b 61px,#fffa7f 89px,#ffb051 115px,#ff702a 155px,#ff3909 221px,#ff2900 253px)"></i><i style="left:1234px;top:338px;width:257px;height:2px;background:linear-gradient(90deg,#00ffa0 0px,#0eff9e 9px,#9bff90 59px,#fffc85 88px,#ffb357 113px,#ff722e 152px,#ff3b0c 216px,#ff2600 257px)"></i><i style="left:1233px;top:340px;width:261px;height:2px;background:linear-gradient(90deg,#00ffa5 0px,#0effa2 9px,#9cff95 59px,#fffa88 88px,#ffb15a 113px,#ff7130 152px,#ff390d 217px,#ff2400 261px)"></i><i style="left:1233px;top:342px;width:264px;height:2px;background:linear-gradient(90deg,#00ffa8 0px,#15ffa6 11px,#a4ff99 60px,#fffc8f 86px,#ffb25e 111px,#ff7234 149px,#ff3b10 212px,#ff2100 264px)"></i><i style="left:1232px;top:344px;width:268px;height:2px;background:linear-gradient(90deg,#00ffad 0px,#0fffab 9px,#9eff9f 58px,#fffa93 86px,#ffb061 111px,#ff7036 149px,#ff3a11 212px,#ff1f00 268px)"></i><i style="left:1231px;top:346px;width:272px;height:2px;background:linear-gradient(90deg,#00ffb1 0px,#0effaf 9px,#9bffa4 57px,#fffc99 85px,#ffb367 109px,#ff733b 146px,#ff3c15 207px,#ff1d00 272px)"></i><i style="left:1231px;top:348px;width:275px;height:2px;background:linear-gradient(90deg,#00ffb5 0px,#15ffb3 11px,#a3ffa8 58px,#fffa9d 84px,#ffb16a 108px,#ff713d 145px,#ff3a16 207px,#ff1a00 275px)"></i><i style="left:1230px;top:350px;width:280px;height:2px;background:linear-gradient(90deg,#00ffba 0px,#0dffb8 8px,#99ffae 55px,#fffca4 83px,#ffb26f 107px,#ff7140 144px,#ff3a18 205px,#ff1800 280px)"></i><i style="left:1229px;top:352px;width:284px;height:2px;background:linear-gradient(90deg,#00ffbe 0px,#0fffbd 9px,#9effb3 56px,#fffaa9 83px,#ffb072 107px,#ff7042 144px,#ff3919 205px,#ff1600 284px)"></i><i style="left:1229px;top:354px;width:287px;height:2px;background:linear-gradient(90deg,#00ffc3 0px,#14ffc1 10px,#a2ffb8 56px,#fffcb0 81px,#ffb378 104px,#ff7247 140px,#ff3b1d 199px,#ff1300 287px)"></i><i style="left:1228px;top:356px;width:291px;height:2px;background:linear-gradient(90deg,#00ffc7 0px,#0dffc6 8px,#9cffbe 54px,#fffeb7 80px,#ffb47e 103px,#ff734b 138px,#ff3c20 196px,#ff1100 291px)"></i><i style="left:1227px;top:358px;width:295px;height:2px;background:linear-gradient(90deg,#00ffcc 0px,#0dffcb 8px,#99ffc4 53px,#fffcbc 80px,#ffb281 103px,#ff724e 138px,#ff3b22 196px,#ff0f00 295px)"></i><i style="left:1227px;top:360px;width:298px;height:2px;background:linear-gradient(90deg,#00ffd1 0px,#14ffd0 10px,#a1ffc9 54px,#fffec4 78px,#ffb588 100px,#ff7453 134px,#ff3d26 190px,#ff0f01 292px,#ff0d00 298px)"></i><i style="left:1226px;top:362px;width:302px;height:2px;background:linear-gradient(90deg,#00ffd6 0px,#0effd5 8px,#9affcf 52px,#fffcc8 78px,#ffb38b 100px,#ff7356 134px,#ff3c28 190px,#ff0e01 293px,#ff0c00 302px)"></i><i style="left:1225px;top:364px;width:306px;height:2px;background:linear-gradient(90deg,#00ffdb 0px,#0bffda 7px,#98ffd5 51px,#fffed0 77px,#ffb491 99px,#ff7359 133px,#ff3b2a 189px,#ff0e03 291px,#ff0a00 306px)"></i><i style="left:1224px;top:366px;width:311px;height:2px;background:linear-gradient(90deg,#00ffe0 0px,#0dffe0 8px,#98ffdb 51px,#fffbd5 77px,#ffb294 99px,#ff715b 133px,#ff3a2b 189px,#ff0d03 292px,#ff0800 311px)"></i><i style="left:1224px;top:368px;width:314px;height:2px;background:linear-gradient(90deg,#00ffe6 0px,#0fffe5 8px,#9dffe2 51px,#fffede 75px,#ffb29a 97px,#ff7260 130px,#ff3b2f 185px,#ff0e06 285px,#ff0600 314px)"></i><i style="left:1223px;top:370px;width:318px;height:2px;background:linear-gradient(90deg,#00ffeb 0px,#0bffeb 7px,#9affe8 50px,#fffbe3 75px,#ffb09e 97px,#ff7163 130px,#ff3a30 185px,#ff0c07 286px,#ff0400 318px)"></i><i style="left:1222px;top:372px;width:322px;height:2px;background:linear-gradient(90deg,#00fff1 0px,#0dfff0 8px,#9bffef 50px,#fffeec 74px,#ffb4a6 95px,#ff7369 127px,#ff3c35 180px,#ff0e0a 277px,#ff0300 322px)"></i><i style="left:1222px;top:374px;width:325px;height:2px;background:linear-gradient(90deg,#00fff6 0px,#0dfff6 7px,#9cfff5 49px,#fffbf1 73px,#ffb2aa 94px,#ff726c 126px,#ff3b37 179px,#ff0d0b 276px,#ff0100 325px)"></i><i style="left:1221px;top:376px;width:329px;height:2px;background:linear-gradient(90deg,#00fffc 0px,#09fffc 6px,#95fffc 47px,#fffefb 72px,#ffb2b0 93px,#ff7170 125px,#ff3a39 178px,#ff0d0d 275px,#ff0000 329px)"></i><i style="left:1220px;top:378px;width:326px;height:2px;background:linear-gradient(90deg,#00fcff 0px,#0bfcff 7px,#97fbff 48px,#fff7fb 73px,#ffaeb1 94px,#ff6e71 126px,#ff383a 179px,#ff0c0d 276px,#ff0001 326px)"></i><i style="left:1220px;top:380px;width:322px;height:2px;background:linear-gradient(90deg,#00f6ff 0px,#10f6ff 8px,#a0f4ff 50px,#fff0fc 73px,#ffa9b2 94px,#ff6b72 126px,#ff363b 179px,#ff0b0e 276px,#ff0002 322px)"></i><i style="left:1219px;top:382px;width:318px;height:2px;background:linear-gradient(90deg,#00f0ff 0px,#0cf0ff 7px,#98edff 49px,#ffe9fc 74px,#ffa4b3 95px,#ff6772 128px,#ff333b 182px,#ff080e 281px,#ff0004 318px)"></i><i style="left:1218px;top:384px;width:315px;height:2px;background:linear-gradient(90deg,#00ebff 0px,#0beaff 7px,#99e7ff 50px,#ffe3fd 75px,#ffa0b4 96px,#ff6473 129px,#ff313c 183px,#ff070e 282px,#ff0006 315px)"></i><i style="left:1218px;top:386px;width:310px;height:2px;background:linear-gradient(90deg,#00e5ff 0px,#12e5ff 9px,#a1e0ff 52px,#ffdcfd 75px,#ff99b2 97px,#ff5f73 130px,#ff2e3b 185px,#ff050e 286px,#ff0007 310px)"></i><i style="left:1217px;top:388px;width:307px;height:2px;background:linear-gradient(90deg,#00e0ff 0px,#0bdfff 7px,#9adaff 51px,#ffd2fa 77px,#ff92b1 99px,#ff5a71 133px,#ff2a3a 190px,#ff020d 294px,#ff0009 307px)"></i><i style="left:1216px;top:390px;width:303px;height:2px;background:linear-gradient(90deg,#00dbff 0px,#0ddaff 8px,#9bd4ff 52px,#ffccfa 78px,#ff8eb2 100px,#ff5772 134px,#ff283b 191px,#ff010d 295px,#ff000b 303px)"></i><i style="left:1216px;top:392px;width:299px;height:2px;background:linear-gradient(90deg,#00d6ff 0px,#15d4ff 10px,#a3ceff 54px,#ffc6fb 78px,#ff88b0 101px,#ff5270 136px,#ff2439 194px,#ff000d 299px)"></i><i style="left:1215px;top:394px;width:295px;height:2px;background:linear-gradient(90deg,#00d1ff 0px,#0ed0ff 8px,#9cc8ff 53px,#ffc0fb 79px,#ff84b1 102px,#ff4f71 137px,#ff233a 195px,#ff000f 295px)"></i><i style="left:1214px;top:396px;width:292px;height:2px;background:linear-gradient(90deg,#00ccff 0px,#0dcbff 8px,#9dc3ff 54px,#ffbafc 80px,#ff80b2 103px,#ff4d72 138px,#ff213b 196px,#ff0011 292px)"></i><i style="left:1213px;top:398px;width:288px;height:2px;background:linear-gradient(90deg,#00c7ff 0px,#0cc6ff 8px,#9abdff 54px,#ffb5fc 81px,#ff7cb3 104px,#ff4972 140px,#ff1e3b 199px,#ff0013 288px)"></i><i style="left:1213px;top:400px;width:284px;height:2px;background:linear-gradient(90deg,#00c2ff 0px,#10c1ff 9px,#9eb7ff 55px,#ffaffd 81px,#ff78b4 104px,#ff4673 140px,#ff1c3c 199px,#ff0015 284px)"></i><i style="left:1212px;top:402px;width:280px;height:2px;background:linear-gradient(90deg,#00beff 0px,#0dbcff 8px,#9bb2ff 55px,#ffaafd 82px,#ff72b2 106px,#ff4271 143px,#ff193a 204px,#ff0017 280px)"></i><i style="left:1211px;top:404px;width:277px;height:2px;background:linear-gradient(90deg,#00b9ff 0px,#0eb8ff 9px,#9badff 56px,#ffa2fa 84px,#ff6db1 108px,#ff3e71 145px,#ff163a 207px,#ff0019 277px)"></i><i style="left:1211px;top:406px;width:272px;height:2px;background:linear-gradient(90deg,#00b5ff 0px,#13b3ff 10px,#a3a7ff 58px,#ff9cfa 84px,#ff69b2 108px,#ff3c72 145px,#ff153a 207px,#ff001c 272px)"></i><i style="left:1210px;top:408px;width:269px;height:2px;background:linear-gradient(90deg,#00b1ff 0px,#0dafff 8px,#9ca3ff 57px,#ff97fb 85px,#ff64b0 110px,#ff3870 148px,#ff1239 211px,#ff001e 269px)"></i><i style="left:1209px;top:410px;width:265px;height:2px;background:linear-gradient(90deg,#00acff 0px,#0eaaff 9px,#9d9eff 58px,#ff92fb 86px,#ff60b1 111px,#ff3571 149px,#ff103a 212px,#ff0021 265px)"></i><i style="left:1209px;top:412px;width:261px;height:2px;background:linear-gradient(90deg,#00a8ff 0px,#17a5ff 12px,#a798ff 61px,#ff8dfc 86px,#ff5db2 111px,#ff3271 150px,#ff0e3a 214px,#ff0023 261px)"></i><i style="left:1208px;top:414px;width:257px;height:2px;background:linear-gradient(90deg,#00a4ff 0px,#0fa2ff 9px,#9e94ff 59px,#ff88fc 87px,#ff59b3 112px,#ff3072 151px,#ff0c3b 215px,#ff0026 257px)"></i><i style="left:1207px;top:416px;width:254px;height:2px;background:linear-gradient(90deg,#00a0ff 0px,#109eff 10px,#9e8fff 60px,#ff84fd 88px,#ff56b4 113px,#ff2d73 152px,#ff0b3c 216px,#ff0028 254px)"></i><i style="left:1207px;top:418px;width:249px;height:2px;background:linear-gradient(90deg,#009cff 0px,#1c98ff 14px,#ac89ff 64px,#ff7ffd 88px,#ff51b2 114px,#ff2a71 154px,#ff083a 220px,#ff002b 249px)"></i><i style="left:1206px;top:420px;width:246px;height:2px;background:linear-gradient(90deg,#0098ff 0px,#1196ff 10px,#9f86ff 61px,#ff78fa 90px,#ff4db1 116px,#ff2771 156px,#ff063a 223px,#ff002e 246px)"></i><i style="left:1205px;top:422px;width:242px;height:2px;background:linear-gradient(90deg,#0095ff 0px,#1092ff 10px,#a081ff 62px,#ff74fa 91px,#ff4ab2 117px,#ff2472 157px,#ff053a 224px,#ff0031 242px)"></i><i style="left:1205px;top:424px;width:238px;height:2px;background:linear-gradient(90deg,#0091ff 0px,#208cff 16px,#b07bff 67px,#ff6ffb 91px,#ff45b0 118px,#ff2170 159px,#ff0239 227px,#ff0034 238px)"></i><i style="left:1204px;top:426px;width:234px;height:2px;background:linear-gradient(90deg,#008dff 0px,#158aff 12px,#a478ff 64px,#ff6bfb 92px,#ff42b1 119px,#ff1f71 160px,#ff013a 228px,#ff0037 234px)"></i><i style="left:1203px;top:428px;width:231px;height:2px;background:linear-gradient(90deg,#008aff 0px,#1286ff 11px,#a174ff 64px,#ff67fc 93px,#ff3fb2 120px,#ff1c71 162px,#ff003a 231px)"></i><i style="left:1202px;top:430px;width:227px;height:2px;background:linear-gradient(90deg,#0086ff 0px,#0f83ff 10px,#9e71ff 64px,#ff63fc 94px,#ff3cb3 121px,#ff1a72 163px,#ff003e 227px)"></i><i style="left:1202px;top:432px;width:223px;height:2px;background:linear-gradient(90deg,#0083ff 0px,#1a7eff 14px,#a86bff 67px,#ff5efd 94px,#ff39b3 121px,#ff1872 163px,#ff0041 223px)"></i><i style="left:1201px;top:434px;width:219px;height:2px;background:linear-gradient(90deg,#007fff 0px,#127cff 11px,#9f68ff 65px,#ff5afd 95px,#ff35b2 123px,#ff1571 166px,#ff0044 219px)"></i><i style="left:1200px;top:436px;width:216px;height:2px;background:linear-gradient(90deg,#007cff 0px,#1179ff 11px,#a065ff 66px,#ff55fa 97px,#ff31b1 125px,#ff1271 168px,#ff0048 216px)"></i><i style="left:1200px;top:438px;width:211px;height:2px;background:linear-gradient(90deg,#0079ff 0px,#1e73ff 16px,#ac5fff 70px,#ff51fa 97px,#ff2eb1 125px,#ff1070 169px,#ff004c 211px)"></i><i style="left:1199px;top:440px;width:208px;height:2px;background:linear-gradient(90deg,#0075ff 0px,#1472ff 12px,#a35cff 68px,#ff4dfb 98px,#ff2bb0 127px,#ff0e70 171px,#ff0050 208px)"></i><i style="left:1198px;top:442px;width:204px;height:2px;background:linear-gradient(90deg,#0072ff 0px,#136eff 12px,#a159ff 68px,#ff49fb 99px,#ff28b1 128px,#ff0c71 172px,#ff0054 204px)"></i><i style="left:1198px;top:444px;width:200px;height:2px;background:linear-gradient(90deg,#006fff 0px,#2668ff 20px,#b652ff 75px,#ff45fc 99px,#ff25b2 128px,#ff0971 173px,#ff0058 200px)"></i><i style="left:1197px;top:446px;width:196px;height:2px;background:linear-gradient(90deg,#006cff 0px,#1867ff 14px,#a751ff 71px,#ff42fc 100px,#ff23b2 129px,#ff0771 174px,#ff005d 196px)"></i><i style="left:1196px;top:448px;width:193px;height:2px;background:linear-gradient(90deg,#0069ff 0px,#1565ff 13px,#a54eff 71px,#ff3efd 101px,#ff20b3 130px,#ff0672 175px,#ff0061 193px)"></i><i style="left:1196px;top:450px;width:188px;height:2px;background:linear-gradient(90deg,#0066ff 0px,#305dff 25px,#c245ff 81px,#ff39fa 102px,#ff1cb0 132px,#ff0370 178px,#ff0066 188px)"></i><i style="left:1195px;top:452px;width:185px;height:2px;background:linear-gradient(90deg,#0063ff 0px,#1b5eff 16px,#ab46ff 74px,#ff36fa 103px,#ff19b1 133px,#ff0171 179px,#ff006b 185px)"></i><i style="left:1194px;top:454px;width:181px;height:2px;background:linear-gradient(90deg,#0060ff 0px,#185bff 15px,#a943ff 74px,#ff32fb 104px,#ff17b1 134px,#ff0070 181px)"></i><i style="left:1194px;top:456px;width:177px;height:2px;background:linear-gradient(90deg,#005dff 0px,#4151ff 33px,#d438ff 89px,#ff2ffb 104px,#ff14b0 135px,#ff0075 177px)"></i><i style="left:1193px;top:458px;width:173px;height:2px;background:linear-gradient(90deg,#005bff 0px,#2353ff 20px,#b43aff 79px,#ff2cfb 105px,#ff11b1 136px,#ff007c 173px)"></i><i style="left:1192px;top:460px;width:170px;height:2px;background:linear-gradient(90deg,#0058ff 0px,#1c52ff 17px,#ac38ff 77px,#ff28fc 106px,#ff0fb2 137px,#ff0081 170px)"></i><i style="left:1191px;top:462px;width:166px;height:2px;background:linear-gradient(90deg,#0055ff 0px,#1550ff 14px,#a436ff 75px,#ff25fc 107px,#ff0db2 138px,#ff0088 166px)"></i><i style="left:1191px;top:464px;width:162px;height:2px;background:linear-gradient(90deg,#0053ff 0px,#2d49ff 25px,#bd2fff 84px,#ff22fc 107px,#ff0ab3 138px,#ff008e 162px)"></i><i style="left:1190px;top:466px;width:158px;height:2px;background:linear-gradient(90deg,#0050ff 0px,#1e49ff 18px,#ad2fff 79px,#ff1efa 109px,#ff07b0 141px,#ff0095 158px)"></i><i style="left:1189px;top:468px;width:155px;height:2px;background:linear-gradient(90deg,#004eff 0px,#1748ff 15px,#a52dff 77px,#ff1bfa 110px,#ff04b1 142px,#ff009c 155px)"></i><i style="left:1189px;top:470px;width:150px;height:2px;background:linear-gradient(90deg,#004bff 0px,#3b3eff 32px,#cc23ff 91px,#ff17fb 110px,#ff02b1 142px,#ff00a4 150px)"></i><i style="left:1188px;top:472px;width:147px;height:2px;background:linear-gradient(90deg,#0048ff 0px,#2141ff 20px,#b125ff 82px,#ff14fb 111px,#ff00b0 144px,#ff00ab 147px)"></i><i style="left:1187px;top:474px;width:144px;height:2px;background:linear-gradient(90deg,#0046ff 0px,#1a40ff 17px,#a923ff 80px,#ff11fb 112px,#ff00b3 144px)"></i><i style="left:1187px;top:476px;width:139px;height:2px;background:linear-gradient(90deg,#0043ff 0px,#4b33ff 40px,#dd16ff 99px,#ff0ef9 113px,#ff00bc 139px)"></i><i style="left:1186px;top:478px;width:136px;height:2px;background:linear-gradient(90deg,#0041ff 0px,#2838ff 24px,#b91bff 87px,#ff0cfc 113px,#ff00c5 136px)"></i><i style="left:1185px;top:480px;width:132px;height:2px;background:linear-gradient(90deg,#003fff 0px,#2037ff 20px,#af1aff 84px,#ff09fc 114px,#ff00d0 132px)"></i><i style="left:1185px;top:482px;width:128px;height:2px;background:linear-gradient(90deg,#003cff 0px,#542aff 45px,#e70bff 105px,#ff05fa 115px,#ff00d9 128px)"></i><i style="left:1184px;top:484px;width:124px;height:2px;background:linear-gradient(90deg,#003aff 0px,#362eff 31px,#c70fff 94px,#ff02fa 116px,#ff00e5 124px)"></i><i style="left:1183px;top:486px;width:121px;height:2px;background:linear-gradient(90deg,#0038ff 0px,#252fff 23px,#b510ff 88px,#ff00fb 117px,#ff00f0 121px)"></i><i style="left:1183px;top:488px;width:116px;height:2px;background:linear-gradient(90deg,#0036ff 0px,#5822ff 48px,#ec02ff 109px,#ff00fe 116px)"></i><i style="left:1182px;top:490px;width:113px;height:2px;background:linear-gradient(90deg,#0034ff 0px,#4723ff 40px,#d903ff 103px,#f500ff 113px)"></i><i style="left:1181px;top:492px;width:109px;height:2px;background:linear-gradient(90deg,#0032ff 0px,#2c27ff 27px,#bd07ff 93px,#e700ff 109px)"></i><i style="left:1180px;top:494px;width:106px;height:2px;background:linear-gradient(90deg,#0030ff 0px,#1e28ff 20px,#ae08ff 88px,#dc00ff 106px)"></i><i style="left:1180px;top:496px;width:101px;height:2px;background:linear-gradient(90deg,#002dff 0px,#511aff 46px,#cf00ff 101px)"></i><i style="left:1179px;top:498px;width:98px;height:2px;background:linear-gradient(90deg,#002bff 0px,#341eff 32px,#c500ff 98px)"></i><i style="left:1178px;top:500px;width:94px;height:2px;background:linear-gradient(90deg,#0029ff 0px,#2320ff 23px,#b400ff 92px,#b900ff 94px)"></i><i style="left:1178px;top:502px;width:90px;height:2px;background:linear-gradient(90deg,#0027ff 0px,#5812ff 50px,#af00ff 90px)"></i><i style="left:1177px;top:504px;width:86px;height:2px;background:linear-gradient(90deg,#0025ff 0px,#4115ff 39px,#a400ff 86px)"></i><i style="left:1176px;top:506px;width:83px;height:2px;background:linear-gradient(90deg,#0023ff 0px,#2918ff 27px,#9b00ff 83px)"></i><i style="left:1176px;top:508px;width:78px;height:2px;background:linear-gradient(90deg,#0021ff 0px,#5c0aff 53px,#9000ff 78px)"></i><i style="left:1175px;top:510px;width:75px;height:2px;background:linear-gradient(90deg,#001fff 0px,#4f0bff 47px,#8800ff 75px)"></i><i style="left:1174px;top:512px;width:71px;height:2px;background:linear-gradient(90deg,#001eff 0px,#3210ff 32px,#7e00ff 71px)"></i><i style="left:1174px;top:514px;width:67px;height:2px;background:linear-gradient(90deg,#001bff 0px,#6003ff 56px,#7600ff 67px)"></i><i style="left:1173px;top:516px;width:63px;height:2px;background:linear-gradient(90deg,#001aff 0px,#5504ff 51px,#6c00ff 63px)"></i><i style="left:1172px;top:518px;width:60px;height:2px;background:linear-gradient(90deg,#0018ff 0px,#3b08ff 38px,#6500ff 60px)"></i><i style="left:1172px;top:520px;width:55px;height:2px;background:linear-gradient(90deg,#0016ff 0px,#5c00ff 55px)"></i><i style="left:1171px;top:522px;width:52px;height:2px;background:linear-gradient(90deg,#0014ff 0px,#5500ff 52px)"></i><i style="left:1170px;top:524px;width:48px;height:2px;background:linear-gradient(90deg,#0013ff 0px,#4b00ff 47px,#4c00ff 48px)"></i><i style="left:1169px;top:526px;width:45px;height:2px;background:linear-gradient(90deg,#0011ff 0px,#2d04ff 31px,#4600ff 45px)"></i><i style="left:1169px;top:528px;width:40px;height:2px;background:linear-gradient(90deg,#000fff 0px,#3e00ff 40px)"></i><i style="left:1168px;top:530px;width:37px;height:2px;background:linear-gradient(90deg,#000eff 0px,#3800ff 37px)"></i><i style="left:1167px;top:532px;width:33px;height:2px;background:linear-gradient(90deg,#000cff 0px,#3000ff 33px)"></i><i style="left:1167px;top:534px;width:29px;height:2px;background:linear-gradient(90deg,#000aff 0px,#2a00ff 29px)"></i><i style="left:1166px;top:536px;width:25px;height:2px;background:linear-gradient(90deg,#0009ff 0px,#2300ff 25px)"></i><i style="left:1165px;top:538px;width:22px;height:2px;background:linear-gradient(90deg,#0007ff 0px,#1d00ff 22px)"></i><i style="left:1165px;top:540px;width:17px;height:2px;background:linear-gradient(90deg,#0005ff 0px,#1600ff 17px)"></i><i style="left:1164px;top:542px;width:14px;height:2px;background:linear-gradient(90deg,#0004ff 0px,#1100ff 14px)"></i><i style="left:1163px;top:544px;width:10px;height:2px;background:linear-gradient(90deg,#0002ff 0px,#0a00ff 10px)"></i></div><svg width="1713" height="883" style="left:0;top:0"><rect x="1049.7" y="55.8" width="653.3" height="528.4" fill="none" stroke="#9a9a9a" stroke-width="2"/><line x1="1049.7" y1="584.2" x2="1049.7" y2="590.2" stroke="#e8e8e8" stroke-width="2"/><line x1="1043.7" y1="584.2" x2="1049.7" y2="584.2" stroke="#e8e8e8" stroke-width="2"/><line x1="1127.4" y1="584.2" x2="1127.4" y2="590.2" stroke="#e8e8e8" stroke-width="2"/><line x1="1043.7" y1="521.5" x2="1049.7" y2="521.5" stroke="#e8e8e8" stroke-width="2"/><line x1="1205.1" y1="584.2" x2="1205.1" y2="590.2" stroke="#e8e8e8" stroke-width="2"/><line x1="1043.7" y1="458.7" x2="1049.7" y2="458.7" stroke="#e8e8e8" stroke-width="2"/><line x1="1282.7" y1="584.2" x2="1282.7" y2="590.2" stroke="#e8e8e8" stroke-width="2"/><line x1="1043.7" y1="396.0" x2="1049.7" y2="396.0" stroke="#e8e8e8" stroke-width="2"/><line x1="1360.4" y1="584.2" x2="1360.4" y2="590.2" stroke="#e8e8e8" stroke-width="2"/><line x1="1043.7" y1="333.2" x2="1049.7" y2="333.2" stroke="#e8e8e8" stroke-width="2"/><line x1="1438.1" y1="584.2" x2="1438.1" y2="590.2" stroke="#e8e8e8" stroke-width="2"/><line x1="1043.7" y1="270.5" x2="1049.7" y2="270.5" stroke="#e8e8e8" stroke-width="2"/><line x1="1515.8" y1="584.2" x2="1515.8" y2="590.2" stroke="#e8e8e8" stroke-width="2"/><line x1="1043.7" y1="207.8" x2="1049.7" y2="207.8" stroke="#e8e8e8" stroke-width="2"/><line x1="1593.5" y1="584.2" x2="1593.5" y2="590.2" stroke="#e8e8e8" stroke-width="2"/><line x1="1043.7" y1="145.0" x2="1049.7" y2="145.0" stroke="#e8e8e8" stroke-width="2"/><line x1="1671.1" y1="584.2" x2="1671.1" y2="590.2" stroke="#e8e8e8" stroke-width="2"/><line x1="1043.7" y1="82.3" x2="1049.7" y2="82.3" stroke="#e8e8e8" stroke-width="2"/><rect x="1280.1" y="268.0" width="13.6" height="13.6" fill="none" stroke="#ffffff" stroke-width="2"/><rect x="1335.0" y="267.1" width="13.6" height="13.6" fill="none" stroke="#ffffff" stroke-width="2"/><rect x="1307.2" y="308.0" width="13.6" height="13.6" fill="none" stroke="#ffffff" stroke-width="2"/><rect x="1246.6" y="350.0" width="13.6" height="13.6" fill="none" stroke="#ffffff" stroke-width="2"/><rect x="1353.2" y="347.9" width="13.6" height="13.6" fill="none" stroke="#ffffff" stroke-width="2"/><rect x="1337.5" y="352.8" width="13.6" height="13.6" fill="none" stroke="#ffffff" stroke-width="2"/><rect x="1389.5" y="278.9" width="13.6" height="13.6" fill="none" stroke="#ffffff" stroke-width="2"/><rect x="1410.5" y="301.0" width="13.6" height="13.6" fill="none" stroke="#ffffff" stroke-width="2"/><rect x="1441.7" y="321.9" width="13.6" height="13.6" fill="none" stroke="#ffffff" stroke-width="2"/><rect x="1402.0" y="379.2" width="13.6" height="13.6" fill="none" stroke="#ffffff" stroke-width="2"/><rect x="1459.6" y="376.6" width="13.6" height="13.6" fill="none" stroke="#ffffff" stroke-width="2"/><rect x="1204.6" y="407.5" width="13.6" height="13.6" fill="none" stroke="#ffffff" stroke-width="2"/><rect x="1236.5" y="409.0" width="13.6" height="13.6" fill="none" stroke="#ffffff" stroke-width="2"/><rect x="1250.9" y="418.1" width="13.6" height="13.6" fill="none" stroke="#ffffff" stroke-width="2"/><rect x="1267.7" y="436.9" width="13.6" height="13.6" fill="none" stroke="#ffffff" stroke-width="2"/><rect x="1333.6" y="421.0" width="13.6" height="13.6" fill="none" stroke="#ffffff" stroke-width="2"/><rect x="1211.8" y="456.4" width="13.6" height="13.6" fill="none" stroke="#ffffff" stroke-width="2"/><rect x="1192.0" y="487.7" width="13.6" height="13.6" fill="none" stroke="#ffffff" stroke-width="2"/><circle cx="1290.0" cy="264.8" r="4.4" fill="#4f8a4f" stroke="#000" stroke-width="1.2"/><circle cx="1339.0" cy="258.7" r="4.4" fill="#a8b850" stroke="#000" stroke-width="1.2"/><circle cx="1311.0" cy="304.9" r="4.4" fill="#5a6a48" stroke="#000" stroke-width="1.2"/><circle cx="1254.8" cy="352.3" r="4.4" fill="#5fb0a0" stroke="#000" stroke-width="1.2"/><circle cx="1354.5" cy="347.8" r="4.4" fill="#6a5046" stroke="#000" stroke-width="1.2"/><circle cx="1338.9" cy="353.8" r="4.4" fill="#c09080" stroke="#000" stroke-width="1.2"/><circle cx="1392.1" cy="270.7" r="4.4" fill="#e0c040" stroke="#000" stroke-width="1.2"/><circle cx="1415.0" cy="294.2" r="4.4" fill="#e0a040" stroke="#000" stroke-width="1.2"/><circle cx="1446.8" cy="316.6" r="4.4" fill="#d07830" stroke="#000" stroke-width="1.2"/><circle cx="1404.8" cy="385.1" r="4.4" fill="#c05868" stroke="#000" stroke-width="1.2"/><circle cx="1467.7" cy="381.7" r="4.4" fill="#b03848" stroke="#000" stroke-width="1.2"/><circle cx="1215.8" cy="417.2" r="4.4" fill="#00869c" stroke="#000" stroke-width="1.2"/><circle cx="1240.8" cy="420.2" r="4.4" fill="#6080a0" stroke="#000" stroke-width="1.2"/><circle cx="1252.1" cy="429.4" r="4.4" fill="#8888b0" stroke="#000" stroke-width="1.2"/><circle cx="1264.9" cy="453.0" r="4.4" fill="#604068" stroke="#000" stroke-width="1.2"/><circle cx="1330.9" cy="433.9" r="4.4" fill="#c05890" stroke="#000" stroke-width="1.2"/><circle cx="1213.9" cy="472.4" r="4.4" fill="#5060a8" stroke="#000" stroke-width="1.2"/><circle cx="1195.9" cy="506.3" r="4.4" fill="#404898" stroke="#000" stroke-width="1.2"/><rect x="1286" y="369" width="14" height="14" fill="none" stroke="#000" stroke-width="2"/><circle cx="1290.1" cy="371.4" r="4.4" fill="#f4f4f4" stroke="#000" stroke-width="1.2"/><circle cx="1287" cy="374.5" r="4.4" fill="#9a9a9a" stroke="#000" stroke-width="1.2"/><circle cx="1286" cy="396.9" r="4.6" fill="#000" stroke="#000" stroke-width="1"/><rect x="1503.8" y="60.2" width="196" height="162" fill="#2c2c2c"/><defs><linearGradient id="ins1" x1="0" x2="0.25" y1="0" y2="1"><stop offset="0" stop-color="#007699"/><stop offset="1" stop-color="#004e8c"/></linearGradient><linearGradient id="ins2" x1="0" x2="1" y1="0" y2="1"><stop offset="0" stop-color="#00c4ff"/><stop offset="0.5" stop-color="#0aa0ff"/><stop offset="1" stop-color="#3c7cff"/></linearGradient></defs><rect x="1507" y="64.5" width="189" height="153.5" fill="url(#ins1)"/><path d="M1627 64.5 L1696 64.5 L1696 218 L1576 218 Z" fill="url(#ins2)"/><rect x="1506.5" y="63.8" width="190" height="154.7" fill="none" stroke="#a0a0a0" stroke-width="1.4"/><rect x="1594" y="133.5" width="14" height="14" fill="none" stroke="#fff" stroke-width="2"/><circle cx="1621.7" cy="158.7" r="4.4" fill="#00869c" stroke="#000" stroke-width="1.2"/><rect x="1419.6" y="542.2" width="280" height="29" fill="#2c2c2c"/></svg><div class="t" style="left:1361.80px;top:37.80px;font-size:15.00px;color:#d8d8d8;transform:scaleX(0.9600);transform-origin:50% 0;"><span style="position:relative;left:-50%">CIE 1931 xy</span></div><div class="t" style="left:1451.16px;top:547.10px;font-size:21.50px;color:#f0f0f0;transform:scaleX(0.9426);">RGB Triplet: 0, 133, 163</div><div class="t" style="left:1049.70px;top:595.09px;font-size:15.60px;color:#e0e0e0;transform-origin:50% 0;"><span style="position:relative;left:-50%">0</span></div><div class="t" style="left:1002.5px;top:576.9px;font-size:15px;color:#e0e0e0;width:40px;text-align:right">0</div><div class="t" style="left:1127.38px;top:595.09px;font-size:15.60px;color:#e0e0e0;transform-origin:50% 0;"><span style="position:relative;left:-50%">0,1</span></div><div class="t" style="left:1002.5px;top:514.2px;font-size:15px;color:#e0e0e0;width:40px;text-align:right">0,1</div><div class="t" style="left:1205.06px;top:595.09px;font-size:15.60px;color:#e0e0e0;transform-origin:50% 0;"><span style="position:relative;left:-50%">0,2</span></div><div class="t" style="left:1002.5px;top:451.4px;font-size:15px;color:#e0e0e0;width:40px;text-align:right">0,2</div><div class="t" style="left:1282.74px;top:595.09px;font-size:15.60px;color:#e0e0e0;transform-origin:50% 0;"><span style="position:relative;left:-50%">0,3</span></div><div class="t" style="left:1002.5px;top:388.7px;font-size:15px;color:#e0e0e0;width:40px;text-align:right">0,3</div><div class="t" style="left:1360.42px;top:595.09px;font-size:15.60px;color:#e0e0e0;transform-origin:50% 0;"><span style="position:relative;left:-50%">0,4</span></div><div class="t" style="left:1002.5px;top:325.9px;font-size:15px;color:#e0e0e0;width:40px;text-align:right">0,4</div><div class="t" style="left:1438.10px;top:595.09px;font-size:15.60px;color:#e0e0e0;transform-origin:50% 0;"><span style="position:relative;left:-50%">0,5</span></div><div class="t" style="left:1002.5px;top:263.2px;font-size:15px;color:#e0e0e0;width:40px;text-align:right">0,5</div><div class="t" style="left:1515.78px;top:595.09px;font-size:15.60px;color:#e0e0e0;transform-origin:50% 0;"><span style="position:relative;left:-50%">0,6</span></div><div class="t" style="left:1002.5px;top:200.5px;font-size:15px;color:#e0e0e0;width:40px;text-align:right">0,6</div><div class="t" style="left:1593.46px;top:595.09px;font-size:15.60px;color:#e0e0e0;transform-origin:50% 0;"><span style="position:relative;left:-50%">0,7</span></div><div class="t" style="left:1002.5px;top:137.7px;font-size:15px;color:#e0e0e0;width:40px;text-align:right">0,7</div><div class="t" style="left:1671.14px;top:595.09px;font-size:15.60px;color:#e0e0e0;transform-origin:50% 0;"><span style="position:relative;left:-50%">0,8</span></div><div class="t" style="left:1002.5px;top:75.0px;font-size:15px;color:#e0e0e0;width:40px;text-align:right">0,8</div><div class="a" style="left:327.0px;top:640px;width:1239.9px;height:15px;background:#2e2e2e"></div><div class="a" style="left:327.0px;top:655px;width:1239.9px;height:15px;background:#151515"></div><div class="a" style="left:327px;top:640px;width:9px;height:30px;background:#000"></div><div class="a" style="left:336px;top:670px;width:1230.9px;height:28px;background:#424242"></div><div class="a" style="left:327px;top:670px;width:9px;height:28px;background:#262626"></div><div class="a" style="left:336px;top:698px;width:1230.9px;height:28px;background:#7f7f7f"></div><div class="a" style="left:327px;top:698px;width:9px;height:28px;background:#222222"></div><div class="a" style="left:336px;top:726px;width:1230.9px;height:28px;background:#424242"></div><div class="a" style="left:327px;top:726px;width:9px;height:28px;background:#262626"></div><div class="a" style="left:336px;top:754px;width:1230.9px;height:28px;background:#7f7f7f"></div><div class="a" style="left:327px;top:754px;width:9px;height:28px;background:#222222"></div><div class="a" style="left:336px;top:782px;width:1230.9px;height:28px;background:#424242"></div><div class="a" style="left:327px;top:782px;width:9px;height:28px;background:#262626"></div><div class="a" style="left:336px;top:810px;width:1230.9px;height:28px;background:#7f7f7f"></div><div class="a" style="left:327px;top:810px;width:9px;height:28px;background:#222222"></div><div class="a" style="left:336px;top:838px;width:1230.9px;height:28px;background:#424242"></div><div class="a" style="left:327px;top:838px;width:9px;height:28px;background:#262626"></div><div class="t" style="left:419.00px;top:647.96px;font-size:15.40px;color:#ffffff;transform:scaleX(0.6300);font-weight:bold;">White</div><div class="t" style="left:459.90px;top:647.96px;font-size:15.40px;color:#ffffff;transform:scaleX(0.6300);font-weight:bold;">Gray 80</div><div class="t" style="left:502.60px;top:647.96px;font-size:15.40px;color:#ffffff;transform:scaleX(0.6300);font-weight:bold;">Gray 65</div><div class="t" style="left:545.30px;top:647.96px;font-size:15.40px;color:#ffffff;transform:scaleX(0.6300);font-weight:bold;">Gray 50</div><div class="t" style="left:587.70px;top:647.96px;font-size:15.40px;color:#ffffff;transform:scaleX(0.6300);font-weight:bold;">Gray 35</div><div class="t" style="left:630.40px;top:647.96px;font-size:15.40px;color:#ffffff;transform:scaleX(0.6300);font-weight:bold;">Black</div><div class="t" style="left:661.30px;top:647.96px;font-size:15.40px;color:#ffffff;transform:scaleX(0.6300);font-weight:bold;">Dark Skin</div><div class="t" style="left:711.50px;top:647.96px;font-size:15.40px;color:#ffffff;transform:scaleX(0.6300);font-weight:bold;">Light Skin</div><div class="t" style="left:763.20px;top:647.96px;font-size:15.40px;color:#ffffff;transform:scaleX(0.6300);font-weight:bold;">Blue Sky</div><div class="t" style="left:809.00px;top:647.96px;font-size:15.40px;color:#ffffff;transform:scaleX(0.6300);font-weight:bold;">Foliage</div><div class="t" style="left:848.90px;top:647.96px;font-size:15.40px;color:#ffffff;transform:scaleX(0.6300);font-weight:bold;">Blue Flower</div><div class="t" style="left:911.20px;top:647.96px;font-size:15.40px;color:#ffffff;transform:scaleX(0.6300);font-weight:bold;">Bluish Green</div><div class="t" style="left:977.50px;top:647.96px;font-size:15.40px;color:#ffffff;transform:scaleX(0.6300);font-weight:bold;">Orange</div><div class="t" style="left:1018.30px;top:647.96px;font-size:15.40px;color:#ffffff;transform:scaleX(0.6300);font-weight:bold;">Purplish Blue</div><div class="t" style="left:1087.10px;top:647.96px;font-size:15.40px;color:#ffffff;transform:scaleX(0.6300);font-weight:bold;">Moderate Red</div><div class="t" style="left:1161.00px;top:647.96px;font-size:15.40px;color:#ffffff;transform:scaleX(0.6300);font-weight:bold;">Purple</div><div class="t" style="left:1198.10px;top:647.96px;font-size:15.40px;color:#ffffff;transform:scaleX(0.6300);font-weight:bold;">Yellow Green</div><div class="t" style="left:1266.90px;top:647.96px;font-size:15.40px;color:#ffffff;transform:scaleX(0.6300);font-weight:bold;">Orange Yellow</div><div class="t" style="left:1341.00px;top:647.96px;font-size:15.40px;color:#ffffff;transform:scaleX(0.6300);font-weight:bold;">Blue</div><div class="t" style="left:1375.90px;top:647.96px;font-size:15.40px;color:#ffffff;transform:scaleX(0.6300);font-weight:bold;">Green</div><div class="t" style="left:1411.00px;top:647.96px;font-size:15.40px;color:#ffffff;transform:scaleX(0.6300);font-weight:bold;">Red</div><div class="t" style="left:1445.50px;top:647.96px;font-size:15.40px;color:#ffffff;transform:scaleX(0.6300);font-weight:bold;">Yellow</div><div class="t" style="left:1486.80px;top:647.96px;font-size:15.40px;color:#ffffff;transform:scaleX(0.6300);font-weight:bold;">Magenta</div><div class="t" style="left:1535.40px;top:647.96px;font-size:15.40px;color:#ffffff;transform:scaleX(0.6300);font-weight:bold;">Cyan</div><div class="t" style="left:339.30px;top:676.48px;font-size:17.50px;color:#f4f4f4;transform:scaleX(0.6200);">x: CIE31</div><div class="t" style="left:419.00px;top:676.48px;font-size:17.50px;color:#f4f4f4;transform:scaleX(0.6200);">0,31</div><div class="t" style="left:459.90px;top:676.48px;font-size:17.50px;color:#f4f4f4;transform:scaleX(0.6200);">0,31</div><div class="t" style="left:502.60px;top:676.48px;font-size:17.50px;color:#f4f4f4;transform:scaleX(0.6200);">0,31</div><div class="t" style="left:545.30px;top:676.48px;font-size:17.50px;color:#f4f4f4;transform:scaleX(0.6200);">0,31</div><div class="t" style="left:587.70px;top:676.48px;font-size:17.50px;color:#f4f4f4;transform:scaleX(0.6200);">0,31</div><div class="t" style="left:630.40px;top:676.48px;font-size:17.50px;color:#f4f4f4;transform:scaleX(0.6200);">0,30</div><div class="t" style="left:661.30px;top:676.48px;font-size:17.50px;color:#f4f4f4;transform:scaleX(0.6200);">0,39</div><div class="t" style="left:711.50px;top:676.48px;font-size:17.50px;color:#f4f4f4;transform:scaleX(0.6200);">0,37</div><div class="t" style="left:763.20px;top:676.48px;font-size:17.50px;color:#f4f4f4;transform:scaleX(0.6200);">0,25</div><div class="t" style="left:809.00px;top:676.48px;font-size:17.50px;color:#f4f4f4;transform:scaleX(0.6200);">0,34</div><div class="t" style="left:848.90px;top:676.48px;font-size:17.50px;color:#f4f4f4;transform:scaleX(0.6200);">0,26</div><div class="t" style="left:911.20px;top:676.48px;font-size:17.50px;color:#f4f4f4;transform:scaleX(0.6200);">0,26</div><div class="t" style="left:977.50px;top:676.48px;font-size:17.50px;color:#f4f4f4;transform:scaleX(0.6200);">0,51</div><div class="t" style="left:1018.30px;top:676.48px;font-size:17.50px;color:#f4f4f4;transform:scaleX(0.6200);">0,21</div><div class="t" style="left:1087.10px;top:676.48px;font-size:17.50px;color:#f4f4f4;transform:scaleX(0.6200);">0,46</div><div class="t" style="left:1161.00px;top:676.48px;font-size:17.50px;color:#f4f4f4;transform:scaleX(0.6200);">0,28</div><div class="t" style="left:1198.10px;top:676.48px;font-size:17.50px;color:#f4f4f4;transform:scaleX(0.6200);">0,37</div><div class="t" style="left:1266.90px;top:676.48px;font-size:17.50px;color:#f4f4f4;transform:scaleX(0.6200);">0,47</div><div class="t" style="left:1341.00px;top:676.48px;font-size:17.50px;color:#f4f4f4;transform:scaleX(0.6200);">0,19</div><div class="t" style="left:1375.90px;top:676.48px;font-size:17.50px;color:#f4f4f4;transform:scaleX(0.6200);">0,31</div><div class="t" style="left:1411.00px;top:676.48px;font-size:17.50px;color:#f4f4f4;transform:scaleX(0.6200);">0,54</div><div class="t" style="left:1445.50px;top:676.48px;font-size:17.50px;color:#f4f4f4;transform:scaleX(0.6200);">0,44</div><div class="t" style="left:1486.80px;top:676.48px;font-size:17.50px;color:#f4f4f4;transform:scaleX(0.6200);">0,36</div><div class="t" style="left:1535.40px;top:676.48px;font-size:17.50px;color:#f4f4f4;transform:scaleX(0.6200);">0,21</div><div class="t" style="left:339.30px;top:704.48px;font-size:17.50px;color:#f4f4f4;transform:scaleX(0.6200);">y: CIE31</div><div class="t" style="left:419.00px;top:704.48px;font-size:17.50px;color:#f4f4f4;transform:scaleX(0.6200);">0,34</div><div class="t" style="left:459.90px;top:704.48px;font-size:17.50px;color:#f4f4f4;transform:scaleX(0.6200);">0,33</div><div class="t" style="left:502.60px;top:704.48px;font-size:17.50px;color:#f4f4f4;transform:scaleX(0.6200);">0,33</div><div class="t" style="left:545.30px;top:704.48px;font-size:17.50px;color:#f4f4f4;transform:scaleX(0.6200);">0,33</div><div class="t" style="left:587.70px;top:704.48px;font-size:17.50px;color:#f4f4f4;transform:scaleX(0.6200);">0,33</div><div class="t" style="left:630.40px;top:704.48px;font-size:17.50px;color:#f4f4f4;transform:scaleX(0.6200);">0,30</div><div class="t" style="left:661.30px;top:704.48px;font-size:17.50px;color:#f4f4f4;transform:scaleX(0.6200);">0,37</div><div class="t" style="left:711.50px;top:704.48px;font-size:17.50px;color:#f4f4f4;transform:scaleX(0.6200);">0,36</div><div class="t" style="left:763.20px;top:704.48px;font-size:17.50px;color:#f4f4f4;transform:scaleX(0.6200);">0,26</div><div class="t" style="left:809.00px;top:704.48px;font-size:17.50px;color:#f4f4f4;transform:scaleX(0.6200);">0,44</div><div class="t" style="left:848.90px;top:704.48px;font-size:17.50px;color:#f4f4f4;transform:scaleX(0.6200);">0,24</div><div class="t" style="left:911.20px;top:704.48px;font-size:17.50px;color:#f4f4f4;transform:scaleX(0.6200);">0,37</div><div class="t" style="left:977.50px;top:704.48px;font-size:17.50px;color:#f4f4f4;transform:scaleX(0.6200);">0,42</div><div class="t" style="left:1018.30px;top:704.48px;font-size:17.50px;color:#f4f4f4;transform:scaleX(0.6200);">0,18</div><div class="t" style="left:1087.10px;top:704.48px;font-size:17.50px;color:#f4f4f4;transform:scaleX(0.6200);">0,32</div><div class="t" style="left:1161.00px;top:704.48px;font-size:17.50px;color:#f4f4f4;transform:scaleX(0.6200);">0,21</div><div class="t" style="left:1198.10px;top:704.48px;font-size:17.50px;color:#f4f4f4;transform:scaleX(0.6200);">0,52</div><div class="t" style="left:1266.90px;top:704.48px;font-size:17.50px;color:#f4f4f4;transform:scaleX(0.6200);">0,46</div><div class="t" style="left:1341.00px;top:704.48px;font-size:17.50px;color:#f4f4f4;transform:scaleX(0.6200);">0,12</div><div class="t" style="left:1375.90px;top:704.48px;font-size:17.50px;color:#f4f4f4;transform:scaleX(0.6200);">0,51</div><div class="t" style="left:1411.00px;top:704.48px;font-size:17.50px;color:#f4f4f4;transform:scaleX(0.6200);">0,32</div><div class="t" style="left:1445.50px;top:704.48px;font-size:17.50px;color:#f4f4f4;transform:scaleX(0.6200);">0,50</div><div class="t" style="left:1486.80px;top:704.48px;font-size:17.50px;color:#f4f4f4;transform:scaleX(0.6200);">0,24</div><div class="t" style="left:1535.40px;top:704.48px;font-size:17.50px;color:#f4f4f4;transform:scaleX(0.6200);">0,26</div><div class="t" style="left:339.30px;top:732.48px;font-size:17.50px;color:#f4f4f4;transform:scaleX(0.6200);">Y</div><div class="t" style="left:419.00px;top:732.48px;font-size:17.50px;color:#f4f4f4;transform:scaleX(0.6200);">332,07</div><div class="t" style="left:459.90px;top:732.48px;font-size:17.50px;color:#f4f4f4;transform:scaleX(0.6200);">257,49</div><div class="t" style="left:502.60px;top:732.48px;font-size:17.50px;color:#f4f4f4;transform:scaleX(0.6200);">204,39</div><div class="t" style="left:545.30px;top:732.48px;font-size:17.50px;color:#f4f4f4;transform:scaleX(0.6200);">155,23</div><div class="t" style="left:587.70px;top:732.48px;font-size:17.50px;color:#f4f4f4;transform:scaleX(0.6200);">105,70</div><div class="t" style="left:630.40px;top:732.48px;font-size:17.50px;color:#f4f4f4;transform:scaleX(0.6200);">0,41</div><div class="t" style="left:661.30px;top:732.48px;font-size:17.50px;color:#f4f4f4;transform:scaleX(0.6200);">28,24</div><div class="t" style="left:711.50px;top:732.48px;font-size:17.50px;color:#f4f4f4;transform:scaleX(0.6200);">106,20</div><div class="t" style="left:763.20px;top:732.48px;font-size:17.50px;color:#f4f4f4;transform:scaleX(0.6200);">55,68</div><div class="t" style="left:809.00px;top:732.48px;font-size:17.50px;color:#f4f4f4;transform:scaleX(0.6200);">38,66</div><div class="t" style="left:848.90px;top:732.48px;font-size:17.50px;color:#f4f4f4;transform:scaleX(0.6200);">69,27</div><div class="t" style="left:911.20px;top:732.48px;font-size:17.50px;color:#f4f4f4;transform:scaleX(0.6200);">134,96</div><div class="t" style="left:977.50px;top:732.48px;font-size:17.50px;color:#f4f4f4;transform:scaleX(0.6200);">83,32</div><div class="t" style="left:1018.30px;top:732.48px;font-size:17.50px;color:#f4f4f4;transform:scaleX(0.6200);">33,37</div><div class="t" style="left:1087.10px;top:732.48px;font-size:17.50px;color:#f4f4f4;transform:scaleX(0.6200);">52,41</div><div class="t" style="left:1161.00px;top:732.48px;font-size:17.50px;color:#f4f4f4;transform:scaleX(0.6200);">17,74</div><div class="t" style="left:1198.10px;top:732.48px;font-size:17.50px;color:#f4f4f4;transform:scaleX(0.6200);">137,01</div><div class="t" style="left:1266.90px;top:732.48px;font-size:17.50px;color:#f4f4f4;transform:scaleX(0.6200);">130,94</div><div class="t" style="left:1341.00px;top:732.48px;font-size:17.50px;color:#f4f4f4;transform:scaleX(0.6200);">16,75</div><div class="t" style="left:1375.90px;top:732.48px;font-size:17.50px;color:#f4f4f4;transform:scaleX(0.6200);">72,44</div><div class="t" style="left:1411.00px;top:732.48px;font-size:17.50px;color:#f4f4f4;transform:scaleX(0.6200);">31,34</div><div class="t" style="left:1445.50px;top:732.48px;font-size:17.50px;color:#f4f4f4;transform:scaleX(0.6200);">188,47</div><div class="t" style="left:1486.80px;top:732.48px;font-size:17.50px;color:#f4f4f4;transform:scaleX(0.6200);">52,31</div><div class="t" style="left:1535.40px;top:732.48px;font-size:17.50px;color:#f4f4f4;transform:scaleX(0.6200);">59,64</div><div class="t" style="left:339.30px;top:760.48px;font-size:17.50px;color:#f4f4f4;transform:scaleX(0.6200);">Target x:CIE31</div><div class="t" style="left:419.00px;top:760.48px;font-size:17.50px;color:#f4f4f4;transform:scaleX(0.6200);">0,31</div><div class="t" style="left:459.90px;top:760.48px;font-size:17.50px;color:#f4f4f4;transform:scaleX(0.6200);">0,31</div><div class="t" style="left:502.60px;top:760.48px;font-size:17.50px;color:#f4f4f4;transform:scaleX(0.6200);">0,31</div><div class="t" style="left:545.30px;top:760.48px;font-size:17.50px;color:#f4f4f4;transform:scaleX(0.6200);">0,31</div><div class="t" style="left:587.70px;top:760.48px;font-size:17.50px;color:#f4f4f4;transform:scaleX(0.6200);">0,31</div><div class="t" style="left:630.40px;top:760.48px;font-size:17.50px;color:#f4f4f4;transform:scaleX(0.6200);">0,31</div><div class="t" style="left:661.30px;top:760.48px;font-size:17.50px;color:#f4f4f4;transform:scaleX(0.6200);">0,40</div><div class="t" style="left:711.50px;top:760.48px;font-size:17.50px;color:#f4f4f4;transform:scaleX(0.6200);">0,38</div><div class="t" style="left:763.20px;top:760.48px;font-size:17.50px;color:#f4f4f4;transform:scaleX(0.6200);">0,25</div><div class="t" style="left:809.00px;top:760.48px;font-size:17.50px;color:#f4f4f4;transform:scaleX(0.6200);">0,34</div><div class="t" style="left:848.90px;top:760.48px;font-size:17.50px;color:#f4f4f4;transform:scaleX(0.6200);">0,27</div><div class="t" style="left:911.20px;top:760.48px;font-size:17.50px;color:#f4f4f4;transform:scaleX(0.6200);">0,26</div><div class="t" style="left:977.50px;top:760.48px;font-size:17.50px;color:#f4f4f4;transform:scaleX(0.6200);">0,51</div><div class="t" style="left:1018.30px;top:760.48px;font-size:17.50px;color:#f4f4f4;transform:scaleX(0.6200);">0,22</div><div class="t" style="left:1087.10px;top:760.48px;font-size:17.50px;color:#f4f4f4;transform:scaleX(0.6200);">0,46</div><div class="t" style="left:1161.00px;top:760.48px;font-size:17.50px;color:#f4f4f4;transform:scaleX(0.6200);">0,29</div><div class="t" style="left:1198.10px;top:760.48px;font-size:17.50px;color:#f4f4f4;transform:scaleX(0.6200);">0,38</div><div class="t" style="left:1266.90px;top:760.48px;font-size:17.50px;color:#f4f4f4;transform:scaleX(0.6200);">0,47</div><div class="t" style="left:1341.00px;top:760.48px;font-size:17.50px;color:#f4f4f4;transform:scaleX(0.6200);">0,19</div><div class="t" style="left:1375.90px;top:760.48px;font-size:17.50px;color:#f4f4f4;transform:scaleX(0.6200);">0,31</div><div class="t" style="left:1411.00px;top:760.48px;font-size:17.50px;color:#f4f4f4;transform:scaleX(0.6200);">0,54</div><div class="t" style="left:1445.50px;top:760.48px;font-size:17.50px;color:#f4f4f4;transform:scaleX(0.6200);">0,45</div><div class="t" style="left:1486.80px;top:760.48px;font-size:17.50px;color:#f4f4f4;transform:scaleX(0.6200);">0,37</div><div class="t" style="left:1535.40px;top:760.48px;font-size:17.50px;color:#f4f4f4;transform:scaleX(0.6200);">0,21</div><div class="t" style="left:339.30px;top:788.48px;font-size:17.50px;color:#f4f4f4;transform:scaleX(0.6200);">Target y:CIE31</div><div class="t" style="left:419.00px;top:788.48px;font-size:17.50px;color:#f4f4f4;transform:scaleX(0.6200);">0,33</div><div class="t" style="left:459.90px;top:788.48px;font-size:17.50px;color:#f4f4f4;transform:scaleX(0.6200);">0,33</div><div class="t" style="left:502.60px;top:788.48px;font-size:17.50px;color:#f4f4f4;transform:scaleX(0.6200);">0,33</div><div class="t" style="left:545.30px;top:788.48px;font-size:17.50px;color:#f4f4f4;transform:scaleX(0.6200);">0,33</div><div class="t" style="left:587.70px;top:788.48px;font-size:17.50px;color:#f4f4f4;transform:scaleX(0.6200);">0,33</div><div class="t" style="left:630.40px;top:788.48px;font-size:17.50px;color:#f4f4f4;transform:scaleX(0.6200);">0,33</div><div class="t" style="left:661.30px;top:788.48px;font-size:17.50px;color:#f4f4f4;transform:scaleX(0.6200);">0,36</div><div class="t" style="left:711.50px;top:788.48px;font-size:17.50px;color:#f4f4f4;transform:scaleX(0.6200);">0,36</div><div class="t" style="left:763.20px;top:788.48px;font-size:17.50px;color:#f4f4f4;transform:scaleX(0.6200);">0,27</div><div class="t" style="left:809.00px;top:788.48px;font-size:17.50px;color:#f4f4f4;transform:scaleX(0.6200);">0,43</div><div class="t" style="left:848.90px;top:788.48px;font-size:17.50px;color:#f4f4f4;transform:scaleX(0.6200);">0,25</div><div class="t" style="left:911.20px;top:788.48px;font-size:17.50px;color:#f4f4f4;transform:scaleX(0.6200);">0,36</div><div class="t" style="left:977.50px;top:788.48px;font-size:17.50px;color:#f4f4f4;transform:scaleX(0.6200);">0,41</div><div class="t" style="left:1018.30px;top:788.48px;font-size:17.50px;color:#f4f4f4;transform:scaleX(0.6200);">0,19</div><div class="t" style="left:1087.10px;top:788.48px;font-size:17.50px;color:#f4f4f4;transform:scaleX(0.6200);">0,31</div><div class="t" style="left:1161.00px;top:788.48px;font-size:17.50px;color:#f4f4f4;transform:scaleX(0.6200);">0,22</div><div class="t" style="left:1198.10px;top:788.48px;font-size:17.50px;color:#f4f4f4;transform:scaleX(0.6200);">0,49</div><div class="t" style="left:1266.90px;top:788.48px;font-size:17.50px;color:#f4f4f4;transform:scaleX(0.6200);">0,44</div><div class="t" style="left:1341.00px;top:788.48px;font-size:17.50px;color:#f4f4f4;transform:scaleX(0.6200);">0,14</div><div class="t" style="left:1375.90px;top:788.48px;font-size:17.50px;color:#f4f4f4;transform:scaleX(0.6200);">0,49</div><div class="t" style="left:1411.00px;top:788.48px;font-size:17.50px;color:#f4f4f4;transform:scaleX(0.6200);">0,32</div><div class="t" style="left:1445.50px;top:788.48px;font-size:17.50px;color:#f4f4f4;transform:scaleX(0.6200);">0,47</div><div class="t" style="left:1486.80px;top:788.48px;font-size:17.50px;color:#f4f4f4;transform:scaleX(0.6200);">0,25</div><div class="t" style="left:1535.40px;top:788.48px;font-size:17.50px;color:#f4f4f4;transform:scaleX(0.6200);">0,27</div><div class="t" style="left:339.30px;top:816.48px;font-size:17.50px;color:#f4f4f4;transform:scaleX(0.6200);">Target Y</div><div class="t" style="left:419.00px;top:816.48px;font-size:17.50px;color:#f4f4f4;transform:scaleX(0.6200);">332,07</div><div class="t" style="left:459.90px;top:816.48px;font-size:17.50px;color:#f4f4f4;transform:scaleX(0.6200);">262,77</div><div class="t" style="left:502.60px;top:816.48px;font-size:17.50px;color:#f4f4f4;transform:scaleX(0.6200);">211,73</div><div class="t" style="left:545.30px;top:816.48px;font-size:17.50px;color:#f4f4f4;transform:scaleX(0.6200);">163,05</div><div class="t" style="left:587.70px;top:816.48px;font-size:17.50px;color:#f4f4f4;transform:scaleX(0.6200);">113,54</div><div class="t" style="left:630.40px;top:816.48px;font-size:17.50px;color:#f4f4f4;transform:scaleX(0.6200);">0,00</div><div class="t" style="left:661.30px;top:816.48px;font-size:17.50px;color:#f4f4f4;transform:scaleX(0.6200);">33,45</div><div class="t" style="left:711.50px;top:816.48px;font-size:17.50px;color:#f4f4f4;transform:scaleX(0.6200);">115,88</div><div class="t" style="left:763.20px;top:816.48px;font-size:17.50px;color:#f4f4f4;transform:scaleX(0.6200);">62,09</div><div class="t" style="left:809.00px;top:816.48px;font-size:17.50px;color:#f4f4f4;transform:scaleX(0.6200);">43,28</div><div class="t" style="left:848.90px;top:816.48px;font-size:17.50px;color:#f4f4f4;transform:scaleX(0.6200);">77,43</div><div class="t" style="left:911.20px;top:816.48px;font-size:17.50px;color:#f4f4f4;transform:scaleX(0.6200);">139,05</div><div class="t" style="left:977.50px;top:816.48px;font-size:17.50px;color:#f4f4f4;transform:scaleX(0.6200);">94,13</div><div class="t" style="left:1018.30px;top:816.48px;font-size:17.50px;color:#f4f4f4;transform:scaleX(0.6200);">39,03</div><div class="t" style="left:1087.10px;top:816.48px;font-size:17.50px;color:#f4f4f4;transform:scaleX(0.6200);">62,02</div><div class="t" style="left:1161.00px;top:816.48px;font-size:17.50px;color:#f4f4f4;transform:scaleX(0.6200);">22,16</div><div class="t" style="left:1198.10px;top:816.48px;font-size:17.50px;color:#f4f4f4;transform:scaleX(0.6200);">141,98</div><div class="t" style="left:1266.90px;top:816.48px;font-size:17.50px;color:#f4f4f4;transform:scaleX(0.6200);">141,17</div><div class="t" style="left:1341.00px;top:816.48px;font-size:17.50px;color:#f4f4f4;transform:scaleX(0.6200);">20,73</div><div class="t" style="left:1375.90px;top:816.48px;font-size:17.50px;color:#f4f4f4;transform:scaleX(0.6200);">76,29</div><div class="t" style="left:1411.00px;top:816.48px;font-size:17.50px;color:#f4f4f4;transform:scaleX(0.6200);">38,73</div><div class="t" style="left:1445.50px;top:816.48px;font-size:17.50px;color:#f4f4f4;transform:scaleX(0.6200);">195,80</div><div class="t" style="left:1486.80px;top:816.48px;font-size:17.50px;color:#f4f4f4;transform:scaleX(0.6200);">62,52</div><div class="t" style="left:1535.40px;top:816.48px;font-size:17.50px;color:#f4f4f4;transform:scaleX(0.6200);">64,48</div><div class="t" style="left:339.30px;top:844.48px;font-size:17.50px;color:#f4f4f4;transform:scaleX(0.6200);">ΔE 2000</div><div class="t" style="left:419.00px;top:844.48px;font-size:17.50px;color:#f4f4f4;transform:scaleX(0.6200);">6,74</div><div class="t" style="left:459.90px;top:844.48px;font-size:17.50px;color:#f4f4f4;transform:scaleX(0.6200);">5,94</div><div class="t" style="left:502.60px;top:844.48px;font-size:17.50px;color:#f4f4f4;transform:scaleX(0.6200);">5,56</div><div class="t" style="left:545.30px;top:844.48px;font-size:17.50px;color:#f4f4f4;transform:scaleX(0.6200);">5,20</div><div class="t" style="left:587.70px;top:844.48px;font-size:17.50px;color:#f4f4f4;transform:scaleX(0.6200);">4,91</div><div class="t" style="left:630.40px;top:844.48px;font-size:17.50px;color:#f4f4f4;transform:scaleX(0.6200);">0,92</div><div class="t" style="left:661.30px;top:844.48px;font-size:17.50px;color:#f4f4f4;transform:scaleX(0.6200);">4,80</div><div class="t" style="left:711.50px;top:844.48px;font-size:17.50px;color:#f4f4f4;transform:scaleX(0.6200);">5,42</div><div class="t" style="left:763.20px;top:844.48px;font-size:17.50px;color:#f4f4f4;transform:scaleX(0.6200);">2,49</div><div class="t" style="left:809.00px;top:844.48px;font-size:17.50px;color:#f4f4f4;transform:scaleX(0.6200);">2,71</div><div class="t" style="left:848.90px;top:844.48px;font-size:17.50px;color:#f4f4f4;transform:scaleX(0.6200);">2,85</div><div class="t" style="left:911.20px;top:844.48px;font-size:17.50px;color:#f4f4f4;transform:scaleX(0.6200);">1,36</div><div class="t" style="left:977.50px;top:844.48px;font-size:17.50px;color:#f4f4f4;transform:scaleX(0.6200);">5,38</div><div class="t" style="left:1018.30px;top:844.48px;font-size:17.50px;color:#f4f4f4;transform:scaleX(0.6200);">3,26</div><div class="t" style="left:1087.10px;top:844.48px;font-size:17.50px;color:#f4f4f4;transform:scaleX(0.6200);">3,91</div><div class="t" style="left:1161.00px;top:844.48px;font-size:17.50px;color:#f4f4f4;transform:scaleX(0.6200);">2,91</div><div class="t" style="left:1198.10px;top:844.48px;font-size:17.50px;color:#f4f4f4;transform:scaleX(0.6200);">2,59</div><div class="t" style="left:1266.90px;top:844.48px;font-size:17.50px;color:#f4f4f4;transform:scaleX(0.6200);">5,49</div><div class="t" style="left:1341.00px;top:844.48px;font-size:17.50px;color:#f4f4f4;transform:scaleX(0.6200);">3,68</div><div class="t" style="left:1375.90px;top:844.48px;font-size:17.50px;color:#f4f4f4;transform:scaleX(0.6200);">1,74</div><div class="t" style="left:1411.00px;top:844.48px;font-size:17.50px;color:#f4f4f4;transform:scaleX(0.6200);">3,69</div><div class="t" style="left:1445.50px;top:844.48px;font-size:17.50px;color:#f4f4f4;transform:scaleX(0.6200);">4,72</div><div class="t" style="left:1486.80px;top:844.48px;font-size:17.50px;color:#f4f4f4;transform:scaleX(0.6200);">4,18</div><div class="t" style="left:1535.40px;top:844.48px;font-size:17.50px;color:#f4f4f4;transform:scaleX(0.6200);">3,24</div></body></html>
